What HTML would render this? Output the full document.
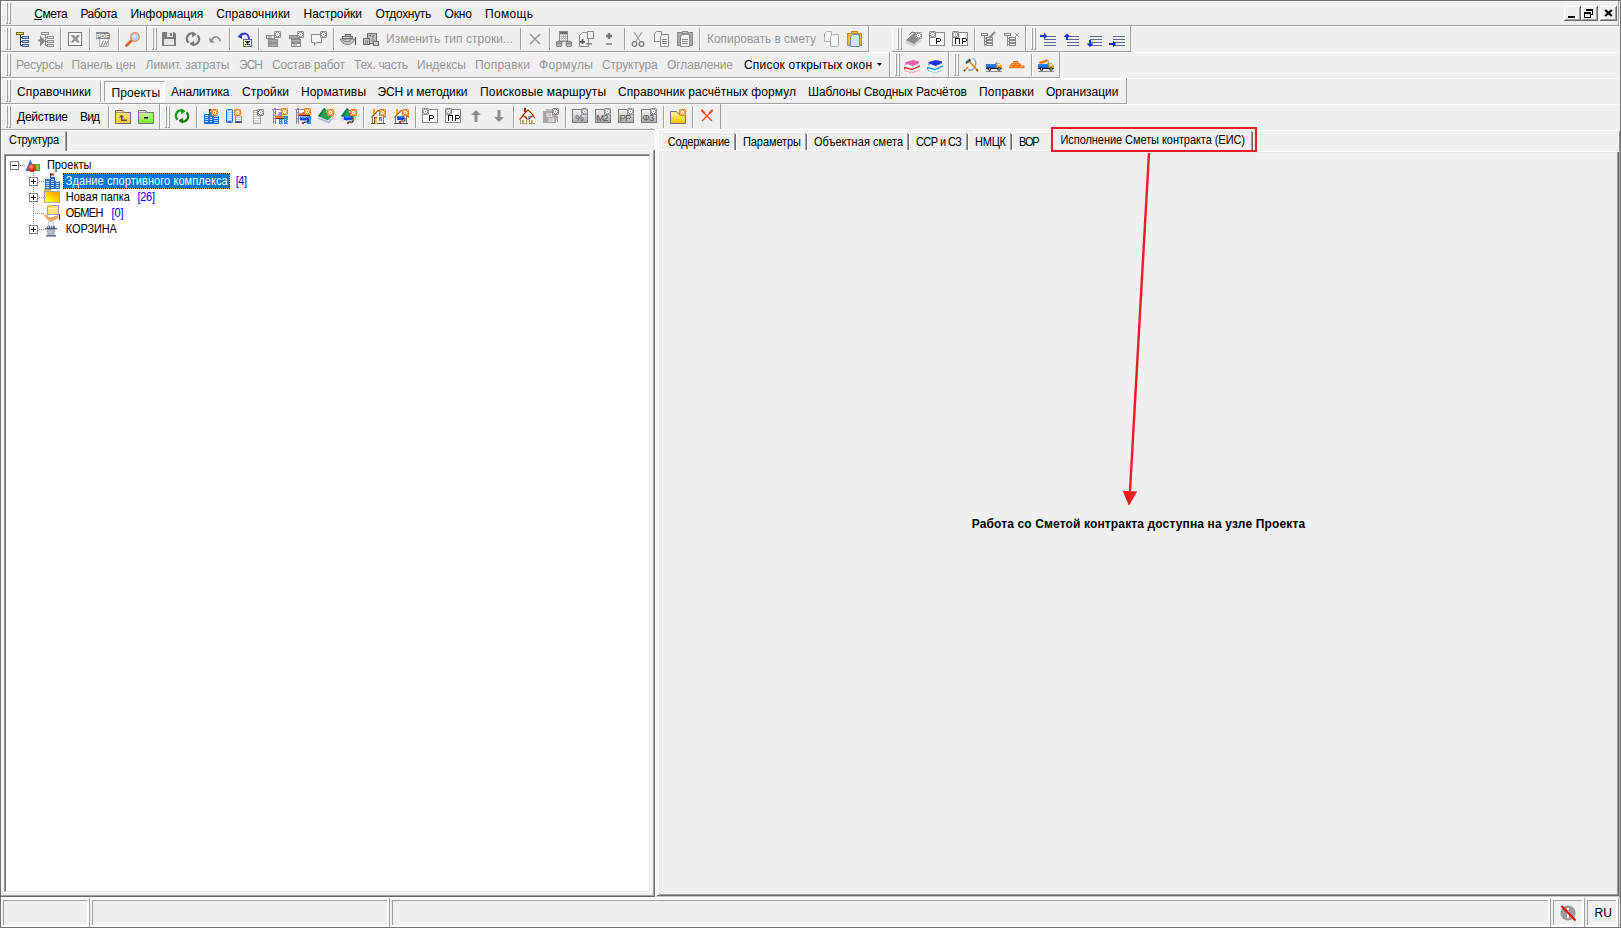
<!DOCTYPE html>
<html><head><meta charset="utf-8"><style>
html,body{margin:0;padding:0;}
body{width:1621px;height:928px;position:relative;overflow:hidden;background:#f0f0f0;font-family:"Liberation Sans",sans-serif;}
body>div,body>svg{position:absolute;}
.t{white-space:nowrap;}
.m{}
</style></head><body>
<div style="left:0px;top:0px;width:1621px;height:1px;background:#717171"></div>
<div style="left:0px;top:0px;width:1px;height:928px;background:#717171"></div>
<div style="left:1620px;top:0px;width:1px;height:928px;background:#717171"></div>
<div style="left:0px;top:927px;width:1621px;height:1px;background:#717171"></div>
<div style="left:1px;top:1px;width:1618px;height:1px;background:#ffffff"></div>
<div style="left:1px;top:1px;width:1px;height:926px;background:#ffffff"></div>
<div style="left:1618px;top:1px;width:1px;height:25px;background:#a0a0a0"></div>
<div style="left:1px;top:25px;width:1618px;height:1px;background:#a0a0a0"></div>
<div style="left:6px;top:3px;width:1px;height:20px;background:#ffffff"></div>
<div style="left:7px;top:3px;width:1px;height:21px;background:#a0a0a0"></div>
<div style="left:6px;top:23px;width:1px;height:1px;background:#a0a0a0"></div>
<div style="left:9px;top:3px;width:1px;height:20px;background:#ffffff"></div>
<div style="left:10px;top:3px;width:1px;height:21px;background:#a0a0a0"></div>
<div style="left:9px;top:23px;width:1px;height:1px;background:#a0a0a0"></div>
<div class="t m" style="left:34.30px;top:8px;font-size:12px;line-height:12px;color:#000;letter-spacing:-0.488px;">Смета</div>
<div class="t m" style="left:80.50px;top:8px;font-size:12px;line-height:12px;color:#000;letter-spacing:-0.525px;">Работа</div>
<div class="t m" style="left:130.50px;top:8px;font-size:12px;line-height:12px;color:#000;letter-spacing:-0.078px;">Информация</div>
<div class="t m" style="left:216.20px;top:8px;font-size:12px;line-height:12px;color:#000;letter-spacing:0.111px;">Справочники</div>
<div class="t m" style="left:303.60px;top:8px;font-size:12px;line-height:12px;color:#000;letter-spacing:-0.052px;">Настройки</div>
<div class="t m" style="left:375.40px;top:8px;font-size:12px;line-height:12px;color:#000;letter-spacing:-0.309px;">Отдохнуть</div>
<div class="t m" style="left:444.50px;top:8px;font-size:12px;line-height:12px;color:#000;letter-spacing:-0.125px;">Окно</div>
<div class="t m" style="left:485.00px;top:8px;font-size:12px;line-height:12px;color:#000;letter-spacing:0.325px;">Помощь</div>
<div style="left:34px;top:19px;width:8px;height:1px;background:#000"></div>
<div style="left:1564px;top:6px;width:17px;height:15px;background:#f0f0f0"></div>
<div style="left:1564px;top:6px;width:16px;height:1px;background:#ffffff"></div>
<div style="left:1564px;top:6px;width:1px;height:14px;background:#ffffff"></div>
<div style="left:1580px;top:6px;width:1px;height:15px;background:#696969"></div>
<div style="left:1579px;top:7px;width:1px;height:13px;background:#a0a0a0"></div>
<div style="left:1564px;top:20px;width:17px;height:1px;background:#696969"></div>
<div style="left:1565px;top:19px;width:15px;height:1px;background:#a0a0a0"></div>
<div style="left:1568px;top:16px;width:7px;height:2px;background:#000"></div>
<div style="left:1581px;top:6px;width:17px;height:15px;background:#f0f0f0"></div>
<div style="left:1581px;top:6px;width:16px;height:1px;background:#ffffff"></div>
<div style="left:1581px;top:6px;width:1px;height:14px;background:#ffffff"></div>
<div style="left:1597px;top:6px;width:1px;height:15px;background:#696969"></div>
<div style="left:1596px;top:7px;width:1px;height:13px;background:#a0a0a0"></div>
<div style="left:1581px;top:20px;width:17px;height:1px;background:#696969"></div>
<div style="left:1582px;top:19px;width:15px;height:1px;background:#a0a0a0"></div>
<svg style="left:1584px;top:9px" width="10" height="9" viewBox="0 0 10 9"><rect x="2" y="0" width="7" height="2" fill="#000"/><rect x="8" y="0" width="1" height="6" fill="#000"/><rect x="7" y="5" width="2" height="1" fill="#000"/><rect x="0" y="3" width="7" height="2" fill="#000"/><rect x="0" y="3" width="1" height="6" fill="#000"/><rect x="6" y="3" width="1" height="6" fill="#000"/><rect x="0" y="8" width="7" height="1" fill="#000"/></svg>
<div style="left:1600px;top:6px;width:17px;height:15px;background:#f0f0f0"></div>
<div style="left:1600px;top:6px;width:16px;height:1px;background:#ffffff"></div>
<div style="left:1600px;top:6px;width:1px;height:14px;background:#ffffff"></div>
<div style="left:1616px;top:6px;width:1px;height:15px;background:#696969"></div>
<div style="left:1615px;top:7px;width:1px;height:13px;background:#a0a0a0"></div>
<div style="left:1600px;top:20px;width:17px;height:1px;background:#696969"></div>
<div style="left:1601px;top:19px;width:15px;height:1px;background:#a0a0a0"></div>
<svg style="left:1604px;top:9px" width="9" height="8" viewBox="0 0 9 8"><path d="M1.2 1L7.8 7M7.8 1L1.2 7" stroke="#000" stroke-width="2.2"/></svg>
<div style="left:1px;top:26px;width:1618px;height:1px;background:#ffffff"></div>
<div style="left:1px;top:26px;width:145px;height:1px;background:#ffffff"></div>
<div style="left:1px;top:26px;width:1px;height:25px;background:#ffffff"></div>
<div style="left:146px;top:26px;width:1px;height:26px;background:#a0a0a0"></div>
<div style="left:1px;top:51px;width:146px;height:1px;background:#a0a0a0"></div>
<div style="left:6px;top:28px;width:1px;height:21px;background:#ffffff"></div>
<div style="left:7px;top:28px;width:1px;height:22px;background:#a0a0a0"></div>
<div style="left:6px;top:49px;width:1px;height:1px;background:#a0a0a0"></div>
<div style="left:9px;top:28px;width:1px;height:21px;background:#ffffff"></div>
<div style="left:10px;top:28px;width:1px;height:22px;background:#a0a0a0"></div>
<div style="left:9px;top:49px;width:1px;height:1px;background:#a0a0a0"></div>
<div style="left:60px;top:28px;width:1px;height:22px;background:#a0a0a0"></div>
<div style="left:61px;top:28px;width:1px;height:22px;background:#ffffff"></div>
<div style="left:89px;top:28px;width:1px;height:22px;background:#a0a0a0"></div>
<div style="left:90px;top:28px;width:1px;height:22px;background:#ffffff"></div>
<div style="left:118px;top:28px;width:1px;height:22px;background:#a0a0a0"></div>
<div style="left:119px;top:28px;width:1px;height:22px;background:#ffffff"></div>
<div style="left:147px;top:26px;width:721px;height:1px;background:#ffffff"></div>
<div style="left:147px;top:26px;width:1px;height:25px;background:#ffffff"></div>
<div style="left:868px;top:26px;width:1px;height:26px;background:#a0a0a0"></div>
<div style="left:147px;top:51px;width:722px;height:1px;background:#a0a0a0"></div>
<div style="left:152px;top:28px;width:1px;height:21px;background:#ffffff"></div>
<div style="left:153px;top:28px;width:1px;height:22px;background:#a0a0a0"></div>
<div style="left:152px;top:49px;width:1px;height:1px;background:#a0a0a0"></div>
<div style="left:155px;top:28px;width:1px;height:21px;background:#ffffff"></div>
<div style="left:156px;top:28px;width:1px;height:22px;background:#a0a0a0"></div>
<div style="left:155px;top:49px;width:1px;height:1px;background:#a0a0a0"></div>
<div style="left:229px;top:28px;width:1px;height:22px;background:#a0a0a0"></div>
<div style="left:230px;top:28px;width:1px;height:22px;background:#ffffff"></div>
<div style="left:258px;top:28px;width:1px;height:22px;background:#a0a0a0"></div>
<div style="left:259px;top:28px;width:1px;height:22px;background:#ffffff"></div>
<div style="left:333px;top:28px;width:1px;height:22px;background:#a0a0a0"></div>
<div style="left:334px;top:28px;width:1px;height:22px;background:#ffffff"></div>
<div style="left:520px;top:28px;width:1px;height:22px;background:#a0a0a0"></div>
<div style="left:521px;top:28px;width:1px;height:22px;background:#ffffff"></div>
<div style="left:549px;top:28px;width:1px;height:22px;background:#a0a0a0"></div>
<div style="left:550px;top:28px;width:1px;height:22px;background:#ffffff"></div>
<div style="left:624px;top:28px;width:1px;height:22px;background:#a0a0a0"></div>
<div style="left:625px;top:28px;width:1px;height:22px;background:#ffffff"></div>
<div style="left:699px;top:28px;width:1px;height:22px;background:#a0a0a0"></div>
<div style="left:700px;top:28px;width:1px;height:22px;background:#ffffff"></div>
<div class="t" style="left:386.00px;top:33px;font-size:12px;line-height:12px;color:#969696;letter-spacing:0.033px;">Изменить тип строки...</div>
<div class="t" style="left:707.00px;top:33px;font-size:12px;line-height:12px;color:#969696;letter-spacing:-0.048px;">Копировать в смету</div>
<div style="left:892px;top:26px;width:133px;height:1px;background:#ffffff"></div>
<div style="left:892px;top:26px;width:1px;height:25px;background:#ffffff"></div>
<div style="left:1025px;top:26px;width:1px;height:26px;background:#a0a0a0"></div>
<div style="left:892px;top:51px;width:134px;height:1px;background:#a0a0a0"></div>
<div style="left:897px;top:28px;width:1px;height:21px;background:#ffffff"></div>
<div style="left:898px;top:28px;width:1px;height:22px;background:#a0a0a0"></div>
<div style="left:897px;top:49px;width:1px;height:1px;background:#a0a0a0"></div>
<div style="left:900px;top:28px;width:1px;height:21px;background:#ffffff"></div>
<div style="left:901px;top:28px;width:1px;height:22px;background:#a0a0a0"></div>
<div style="left:900px;top:49px;width:1px;height:1px;background:#a0a0a0"></div>
<div style="left:974px;top:28px;width:1px;height:22px;background:#a0a0a0"></div>
<div style="left:975px;top:28px;width:1px;height:22px;background:#ffffff"></div>
<div style="left:1026px;top:26px;width:104px;height:1px;background:#ffffff"></div>
<div style="left:1026px;top:26px;width:1px;height:25px;background:#ffffff"></div>
<div style="left:1130px;top:26px;width:1px;height:26px;background:#a0a0a0"></div>
<div style="left:1026px;top:51px;width:105px;height:1px;background:#a0a0a0"></div>
<div style="left:1031px;top:28px;width:1px;height:21px;background:#ffffff"></div>
<div style="left:1032px;top:28px;width:1px;height:22px;background:#a0a0a0"></div>
<div style="left:1031px;top:49px;width:1px;height:1px;background:#a0a0a0"></div>
<div style="left:1034px;top:28px;width:1px;height:21px;background:#ffffff"></div>
<div style="left:1035px;top:28px;width:1px;height:22px;background:#a0a0a0"></div>
<div style="left:1034px;top:49px;width:1px;height:1px;background:#a0a0a0"></div>
<div style="left:1px;top:52px;width:1618px;height:1px;background:#ffffff"></div>
<div style="left:1px;top:52px;width:888px;height:1px;background:#ffffff"></div>
<div style="left:1px;top:52px;width:1px;height:25px;background:#ffffff"></div>
<div style="left:889px;top:52px;width:1px;height:26px;background:#a0a0a0"></div>
<div style="left:1px;top:77px;width:889px;height:1px;background:#a0a0a0"></div>
<div style="left:6px;top:54px;width:1px;height:21px;background:#ffffff"></div>
<div style="left:7px;top:54px;width:1px;height:22px;background:#a0a0a0"></div>
<div style="left:6px;top:75px;width:1px;height:1px;background:#a0a0a0"></div>
<div style="left:9px;top:54px;width:1px;height:21px;background:#ffffff"></div>
<div style="left:10px;top:54px;width:1px;height:22px;background:#a0a0a0"></div>
<div style="left:9px;top:75px;width:1px;height:1px;background:#a0a0a0"></div>
<div class="t d" style="left:16.00px;top:59px;font-size:12px;line-height:12px;color:#969696;letter-spacing:-0.052px;">Ресурсы</div>
<div class="t d" style="left:71.50px;top:59px;font-size:12px;line-height:12px;color:#969696;letter-spacing:-0.068px;">Панель цен</div>
<div class="t d" style="left:145.60px;top:59px;font-size:12px;line-height:12px;color:#969696;letter-spacing:-0.085px;">Лимит. затраты</div>
<div class="t d" style="left:239.00px;top:59px;font-size:12px;line-height:12px;color:#969696;letter-spacing:-0.969px;">ЭСН</div>
<div class="t d" style="left:272.00px;top:59px;font-size:12px;line-height:12px;color:#969696;letter-spacing:-0.199px;">Состав работ</div>
<div class="t d" style="left:354.00px;top:59px;font-size:12px;line-height:12px;color:#969696;letter-spacing:-0.271px;">Тех. часть</div>
<div class="t d" style="left:417.00px;top:59px;font-size:12px;line-height:12px;color:#969696;letter-spacing:0.010px;">Индексы</div>
<div class="t d" style="left:475.00px;top:59px;font-size:12px;line-height:12px;color:#969696;letter-spacing:0.214px;">Поправки</div>
<div class="t d" style="left:539.00px;top:59px;font-size:12px;line-height:12px;color:#969696;letter-spacing:0.292px;">Формулы</div>
<div class="t d" style="left:602.00px;top:59px;font-size:12px;line-height:12px;color:#969696;letter-spacing:-0.167px;">Структура</div>
<div class="t d" style="left:667.00px;top:59px;font-size:12px;line-height:12px;color:#969696;letter-spacing:-0.097px;">Оглавление</div>
<div class="t m" style="left:744.00px;top:59px;font-size:12px;line-height:12px;color:#000;letter-spacing:0.184px;">Список открытых окон</div>
<svg style="left:877px;top:63px" width="6" height="4" viewBox="0 0 6 4"><path d="M0 0h5L2.5 3z" fill="#000"/></svg>
<div style="left:890px;top:52px;width:58px;height:1px;background:#ffffff"></div>
<div style="left:890px;top:52px;width:1px;height:25px;background:#ffffff"></div>
<div style="left:948px;top:52px;width:1px;height:26px;background:#a0a0a0"></div>
<div style="left:890px;top:77px;width:59px;height:1px;background:#a0a0a0"></div>
<div style="left:895px;top:54px;width:1px;height:21px;background:#ffffff"></div>
<div style="left:896px;top:54px;width:1px;height:22px;background:#a0a0a0"></div>
<div style="left:895px;top:75px;width:1px;height:1px;background:#a0a0a0"></div>
<div style="left:898px;top:54px;width:1px;height:21px;background:#ffffff"></div>
<div style="left:899px;top:54px;width:1px;height:22px;background:#a0a0a0"></div>
<div style="left:898px;top:75px;width:1px;height:1px;background:#a0a0a0"></div>
<div style="left:949px;top:52px;width:110px;height:1px;background:#ffffff"></div>
<div style="left:949px;top:52px;width:1px;height:25px;background:#ffffff"></div>
<div style="left:1059px;top:52px;width:1px;height:26px;background:#a0a0a0"></div>
<div style="left:949px;top:77px;width:111px;height:1px;background:#a0a0a0"></div>
<div style="left:954px;top:54px;width:1px;height:21px;background:#ffffff"></div>
<div style="left:955px;top:54px;width:1px;height:22px;background:#a0a0a0"></div>
<div style="left:954px;top:75px;width:1px;height:1px;background:#a0a0a0"></div>
<div style="left:957px;top:54px;width:1px;height:21px;background:#ffffff"></div>
<div style="left:958px;top:54px;width:1px;height:22px;background:#a0a0a0"></div>
<div style="left:957px;top:75px;width:1px;height:1px;background:#a0a0a0"></div>
<div style="left:1031px;top:54px;width:1px;height:22px;background:#a0a0a0"></div>
<div style="left:1032px;top:54px;width:1px;height:22px;background:#ffffff"></div>
<div style="left:1px;top:78px;width:1618px;height:1px;background:#ffffff"></div>
<div style="left:1px;top:78px;width:1125px;height:1px;background:#ffffff"></div>
<div style="left:1px;top:78px;width:1px;height:25px;background:#ffffff"></div>
<div style="left:1126px;top:78px;width:1px;height:26px;background:#a0a0a0"></div>
<div style="left:1px;top:103px;width:1126px;height:1px;background:#a0a0a0"></div>
<div style="left:6px;top:80px;width:1px;height:21px;background:#ffffff"></div>
<div style="left:7px;top:80px;width:1px;height:22px;background:#a0a0a0"></div>
<div style="left:6px;top:101px;width:1px;height:1px;background:#a0a0a0"></div>
<div style="left:9px;top:80px;width:1px;height:21px;background:#ffffff"></div>
<div style="left:10px;top:80px;width:1px;height:22px;background:#a0a0a0"></div>
<div style="left:9px;top:101px;width:1px;height:1px;background:#a0a0a0"></div>
<div style="left:2px;top:79px;width:1124px;height:1px;background:#ffffff"></div>
<div style="left:100px;top:81px;width:1px;height:21px;background:#a0a0a0"></div>
<div style="left:101px;top:81px;width:1px;height:21px;background:#ffffff"></div>
<div style="left:104px;top:81px;width:61px;height:21px;box-sizing:border-box;border-top:1px solid #a0a0a0;border-left:1px solid #a0a0a0;border-right:1px solid #fff;border-bottom:1px solid #fff;background-color:#f0f0f0;background-image:repeating-conic-gradient(#fff 0 25%, #f0f0f0 0 50%);background-size:2px 2px"></div>
<div class="t m" style="left:17.00px;top:86px;font-size:12px;line-height:12px;color:#000;letter-spacing:0.131px;">Справочники</div>
<div class="t m" style="left:111.50px;top:87px;font-size:12px;line-height:12px;color:#000;letter-spacing:0.062px;">Проекты</div>
<div class="t m" style="left:171.00px;top:86px;font-size:12px;line-height:12px;color:#000;letter-spacing:-0.117px;">Аналитика</div>
<div class="t m" style="left:242.00px;top:86px;font-size:12px;line-height:12px;color:#000;letter-spacing:0.135px;">Стройки</div>
<div class="t m" style="left:301.00px;top:86px;font-size:12px;line-height:12px;color:#000;letter-spacing:0.141px;">Нормативы</div>
<div class="t m" style="left:377.50px;top:86px;font-size:12px;line-height:12px;color:#000;letter-spacing:-0.093px;">ЭСН и методики</div>
<div class="t m" style="left:480.00px;top:86px;font-size:12px;line-height:12px;color:#000;letter-spacing:0.180px;">Поисковые маршруты</div>
<div class="t m" style="left:618.00px;top:86px;font-size:12px;line-height:12px;color:#000;letter-spacing:0.082px;">Справочник расчётных формул</div>
<div class="t m" style="left:808.00px;top:86px;font-size:12px;line-height:12px;color:#000;letter-spacing:-0.079px;">Шаблоны Сводных Расчётов</div>
<div class="t m" style="left:979.00px;top:86px;font-size:12px;line-height:12px;color:#000;letter-spacing:0.214px;">Поправки</div>
<div class="t m" style="left:1046.00px;top:86px;font-size:12px;line-height:12px;color:#000;letter-spacing:-0.006px;">Организации</div>
<div style="left:1px;top:104px;width:1618px;height:1px;background:#ffffff"></div>
<div style="left:1px;top:104px;width:158px;height:1px;background:#ffffff"></div>
<div style="left:1px;top:104px;width:1px;height:25px;background:#ffffff"></div>
<div style="left:159px;top:104px;width:1px;height:26px;background:#a0a0a0"></div>
<div style="left:1px;top:129px;width:159px;height:1px;background:#a0a0a0"></div>
<div style="left:6px;top:106px;width:1px;height:21px;background:#ffffff"></div>
<div style="left:7px;top:106px;width:1px;height:22px;background:#a0a0a0"></div>
<div style="left:6px;top:127px;width:1px;height:1px;background:#a0a0a0"></div>
<div style="left:9px;top:106px;width:1px;height:21px;background:#ffffff"></div>
<div style="left:10px;top:106px;width:1px;height:22px;background:#a0a0a0"></div>
<div style="left:9px;top:127px;width:1px;height:1px;background:#a0a0a0"></div>
<div class="t m" style="left:17.00px;top:111px;font-size:12px;line-height:12px;color:#000;letter-spacing:-0.250px;">Действие</div>
<div class="t m" style="left:80.00px;top:111px;font-size:12px;line-height:12px;color:#000;letter-spacing:-0.844px;">Вид</div>
<div style="left:108px;top:106px;width:1px;height:22px;background:#a0a0a0"></div>
<div style="left:109px;top:106px;width:1px;height:22px;background:#ffffff"></div>
<div style="left:160px;top:104px;width:560px;height:1px;background:#ffffff"></div>
<div style="left:160px;top:104px;width:1px;height:25px;background:#ffffff"></div>
<div style="left:720px;top:104px;width:1px;height:26px;background:#a0a0a0"></div>
<div style="left:160px;top:129px;width:561px;height:1px;background:#a0a0a0"></div>
<div style="left:165px;top:106px;width:1px;height:21px;background:#ffffff"></div>
<div style="left:166px;top:106px;width:1px;height:22px;background:#a0a0a0"></div>
<div style="left:165px;top:127px;width:1px;height:1px;background:#a0a0a0"></div>
<div style="left:168px;top:106px;width:1px;height:21px;background:#ffffff"></div>
<div style="left:169px;top:106px;width:1px;height:22px;background:#a0a0a0"></div>
<div style="left:168px;top:127px;width:1px;height:1px;background:#a0a0a0"></div>
<div style="left:196px;top:106px;width:1px;height:22px;background:#a0a0a0"></div>
<div style="left:197px;top:106px;width:1px;height:22px;background:#ffffff"></div>
<div style="left:363px;top:106px;width:1px;height:22px;background:#a0a0a0"></div>
<div style="left:364px;top:106px;width:1px;height:22px;background:#ffffff"></div>
<div style="left:415px;top:106px;width:1px;height:22px;background:#a0a0a0"></div>
<div style="left:416px;top:106px;width:1px;height:22px;background:#ffffff"></div>
<div style="left:513px;top:106px;width:1px;height:22px;background:#a0a0a0"></div>
<div style="left:514px;top:106px;width:1px;height:22px;background:#ffffff"></div>
<div style="left:565px;top:106px;width:1px;height:22px;background:#a0a0a0"></div>
<div style="left:566px;top:106px;width:1px;height:22px;background:#ffffff"></div>
<div style="left:663px;top:106px;width:1px;height:22px;background:#a0a0a0"></div>
<div style="left:664px;top:106px;width:1px;height:22px;background:#ffffff"></div>
<div style="left:692px;top:106px;width:1px;height:22px;background:#a0a0a0"></div>
<div style="left:693px;top:106px;width:1px;height:22px;background:#ffffff"></div>
<svg style="left:16px;top:31px" width="16" height="16" viewBox="0 0 16 16"><rect x="0.5" y="1.5" width="7" height="2" fill="#ffff00" stroke="#6e6e1e" stroke-width="1" /><rect x="4" y="4" width="1" height="11" fill="#1f2d50" /><rect x="5" y="6" width="1" height="1" fill="#1f2d50" /><rect x="6.5" y="5.5" width="6" height="2" fill="#b4dcff" stroke="#50628e" stroke-width="1" /><rect x="5" y="10" width="1" height="1" fill="#1f2d50" /><rect x="6.5" y="9.5" width="6" height="2" fill="#b4dcff" stroke="#50628e" stroke-width="1" /><rect x="5" y="14" width="1" height="1" fill="#1f2d50" /><rect x="6.5" y="13.5" width="6" height="2" fill="#b4dcff" stroke="#50628e" stroke-width="1" /></svg>
<svg style="left:38px;top:31px" width="16" height="16" viewBox="0 0 16 16"><rect x="3.5" y="1.5" width="7" height="2" fill="#f0f0f0" stroke="#8a8a8a" stroke-width="1" /><rect x="7" y="4" width="1" height="11" fill="#8a8a8a" /><rect x="8" y="6" width="1" height="1" fill="#8a8a8a" /><rect x="9.5" y="5.5" width="6" height="2" fill="#f0f0f0" stroke="#8a8a8a" stroke-width="1" /><rect x="8" y="10" width="1" height="1" fill="#8a8a8a" /><rect x="9.5" y="9.5" width="6" height="2" fill="#f0f0f0" stroke="#8a8a8a" stroke-width="1" /><rect x="8" y="14" width="1" height="1" fill="#8a8a8a" /><rect x="9.5" y="13.5" width="6" height="2" fill="#f0f0f0" stroke="#8a8a8a" stroke-width="1" /><path d="M0 9.5h3.5M3 7l3 3-3 3z" stroke="#8a8a8a" stroke-width="2" fill="#8a8a8a"/></svg>
<svg style="left:68px;top:31px" width="16" height="16" viewBox="0 0 16 16"><rect x="0.5" y="1.5" width="13" height="13" fill="#fcfcfc" stroke="#7a7a7a" stroke-width="1" /><path d="M2.5 4h3.5l1.5 2.2L9 4h3l-2.8 3.8L12 11.5H8.5L7 9.3 5.5 11.5H2.5l3-3.7z" fill="#8a8a8a"/><path d="M4 5l6 6" stroke="#b8b8b8" stroke-width="0.8"/></svg>
<svg style="left:96px;top:31px" width="16" height="16" viewBox="0 0 16 16"><path d="M3.5 7.5h9v8h-9z" fill="#f4f4f4" stroke="#b0b0b0"/><path d="M5 15l2.5-5M7.5 15l2.5-5M10 15c0-2.5 1-4 2.5-4.5" stroke="#a0a0a0" stroke-width="1.2" fill="none"/><path d="M0 1h12l2 2v5H0z" fill="#8c8c8c"/><text x="6.8" y="7" font-family="Liberation Sans" font-weight="bold" font-size="6.2" fill="#fff" text-anchor="middle" letter-spacing="0.3">PDF</text></svg>
<svg style="left:125px;top:31px" width="16" height="16" viewBox="0 0 16 16"><path d="M1.5 14.5L6.5 9.5" stroke="#d8601c" stroke-width="2.6" stroke-linecap="round"/><circle cx="10" cy="6" r="4.3" fill="#b8ccf0" stroke="#e8884a" stroke-width="1.3"/><circle cx="9.5" cy="5.5" r="2" fill="#d8e6ff"/></svg>
<svg style="left:162px;top:31px" width="16" height="16" viewBox="0 0 16 16"><path d="M0 1h12l2 2v12H0z" fill="#7c7c7c"/><rect x="5" y="1" width="6" height="5" fill="#e6e6e6" /><rect x="8" y="2" width="2" height="3" fill="#7c7c7c" /><rect x="2" y="8" width="10" height="6" fill="#e6e6e6" /></svg>
<svg style="left:185px;top:31px" width="16" height="16" viewBox="0 0 16 16"><path d="M10 3.2A5.3 5.3 0 0 0 3.6 11.6" stroke="#7a7a7a" stroke-width="2.3" fill="none"/><path d="M6 12.8A5.3 5.3 0 0 0 12.4 4.4" stroke="#7a7a7a" stroke-width="2.3" fill="none"/><path d="M7 0.5l4.5 3-4.5 2.8z" fill="#7a7a7a"/><path d="M9 15.5l-4.5-3 4.5-2.8z" fill="#7a7a7a"/></svg>
<svg style="left:208px;top:31px" width="16" height="16" viewBox="0 0 16 16"><path d="M3.5 9.5C5 5 10.5 4.5 12.5 10.5" stroke="#8a8a8a" stroke-width="1.6" fill="none"/><path d="M1 6.5l1 5h5z" fill="#8a8a8a"/></svg>
<svg style="left:237px;top:31px" width="16" height="16" viewBox="0 0 16 16"><path d="M4 4.5C6 1.5 11 1.5 12 7.5V9" stroke="#3434e6" stroke-width="1.8" fill="none"/><path d="M0.5 5.5L5 1.5V8z" fill="#3434e6"/><rect x="6.5" y="8.5" width="8" height="7" fill="#fff" stroke="#5468a8" stroke-width="1" /><path d="M8 10l5 4M13 10l-5 4M10.5 10v4" stroke="#111" stroke-width="1.2"/></svg>
<svg style="left:266px;top:31px" width="16" height="16" viewBox="0 0 16 16"><rect x="0.5" y="4.5" width="8" height="3" fill="#f4f4f4" stroke="#8a8a8a" stroke-width="1" /><rect x="2" y="5.5" width="4" height="1" fill="#8a8a8a" /><rect x="2.5" y="8.5" width="9" height="3" fill="#a8a8a8" stroke="#8a8a8a" stroke-width="1" /><rect x="2.5" y="12.5" width="9" height="3" fill="#a8a8a8" stroke="#8a8a8a" stroke-width="1" /><rect x="8" y="0" width="7" height="7" rx="1.6" fill="#8a8a8a"/><rect x="11" y="1.5" width="1" height="4" fill="#ffffff"/><rect x="9.5" y="3" width="4" height="1" fill="#ffffff"/><rect x="10" y="2" width="3" height="3" fill="#ffffff"/><rect x="11" y="3" width="1" height="1" fill="#8a8a8a"/><rect x="9" y="1" width="1" height="1" fill="#fff" opacity="0.75"/><rect x="13" y="1" width="1" height="1" fill="#fff" opacity="0.75"/><rect x="9" y="5" width="1" height="1" fill="#fff" opacity="0.75"/><rect x="13" y="5" width="1" height="1" fill="#fff" opacity="0.75"/></svg>
<svg style="left:289px;top:31px" width="16" height="16" viewBox="0 0 16 16"><rect x="0.5" y="4.5" width="10" height="3" fill="#a8a8a8" stroke="#8a8a8a" stroke-width="1" /><rect x="2.5" y="8.5" width="9" height="3" fill="#a8a8a8" stroke="#8a8a8a" stroke-width="1" /><rect x="2.5" y="12.5" width="9" height="3" fill="#f4f4f4" stroke="#8a8a8a" stroke-width="1" /><rect x="4" y="13.5" width="4" height="1" fill="#8a8a8a" /><rect x="8" y="0" width="7" height="7" rx="1.6" fill="#8a8a8a"/><rect x="11" y="1.5" width="1" height="4" fill="#ffffff"/><rect x="9.5" y="3" width="4" height="1" fill="#ffffff"/><rect x="10" y="2" width="3" height="3" fill="#ffffff"/><rect x="11" y="3" width="1" height="1" fill="#8a8a8a"/><rect x="9" y="1" width="1" height="1" fill="#fff" opacity="0.75"/><rect x="13" y="1" width="1" height="1" fill="#fff" opacity="0.75"/><rect x="9" y="5" width="1" height="1" fill="#fff" opacity="0.75"/><rect x="13" y="5" width="1" height="1" fill="#fff" opacity="0.75"/></svg>
<svg style="left:311px;top:31px" width="16" height="16" viewBox="0 0 16 16"><path d="M0.5 3.5h10v8h-5l-2 3v-3H0.5z" fill="#f4f4f4" stroke="#8a8a8a"/><rect x="9" y="0" width="7" height="7" rx="1.6" fill="#8a8a8a"/><rect x="12" y="1.5" width="1" height="4" fill="#ffffff"/><rect x="10.5" y="3" width="4" height="1" fill="#ffffff"/><rect x="11" y="2" width="3" height="3" fill="#ffffff"/><rect x="12" y="3" width="1" height="1" fill="#8a8a8a"/><rect x="10" y="1" width="1" height="1" fill="#fff" opacity="0.75"/><rect x="14" y="1" width="1" height="1" fill="#fff" opacity="0.75"/><rect x="10" y="5" width="1" height="1" fill="#fff" opacity="0.75"/><rect x="14" y="5" width="1" height="1" fill="#fff" opacity="0.75"/></svg>
<svg style="left:340px;top:31px" width="16" height="16" viewBox="0 0 16 16"><rect x="5.5" y="3.5" width="5" height="2" fill="#b0b0b0" stroke="#6e6e6e" stroke-width="1" /><rect x="2.5" y="5.5" width="10" height="2" fill="#b0b0b0" stroke="#6e6e6e" stroke-width="1" /><rect x="6" y="6" width="3" height="1" fill="#e0e0e0" /><rect x="3" y="6" width="2" height="1" fill="#e0e0e0" /><path d="M0.5 8h14c-0.5 3-3 5.5-7 5.5S1 11 0.5 8z" fill="#c8c8c8" stroke="#7a7a7a" stroke-width="1"/><path d="M3 9.5c2 1.5 6 1.5 8 0" stroke="#777" stroke-width="1" fill="none"/><rect x="15" y="6" width="1" height="8" fill="#404040" /></svg>
<svg style="left:363px;top:31px" width="16" height="16" viewBox="0 0 16 16"><rect x="4.5" y="2.5" width="9" height="10" fill="#bcbcbc" stroke="#6a6a6a" stroke-width="1" /><rect x="6" y="4" width="2" height="1" fill="#555" /><rect x="9" y="4" width="2" height="2" fill="#888" /><rect x="9.5" y="6" width="1" height="3" fill="#888" /><rect x="8" y="9" width="4" height="1" fill="#999" /><rect x="0.5" y="7.5" width="6" height="6" fill="#c4c4c4" stroke="#6a6a6a" stroke-width="1" /><rect x="2" y="9" width="1" height="4" fill="#8a8a8a" /><rect x="4" y="9" width="1" height="4" fill="#8a8a8a" /><rect x="10.5" y="10.5" width="5" height="4" fill="#c8c8c8" stroke="#6a6a6a" stroke-width="1" /><rect x="11" y="11" width="1" height="1" fill="#fff" /></svg>
<svg style="left:527px;top:31px" width="16" height="16" viewBox="0 0 16 16"><path d="M3 3l10 10M13 3L3 13" stroke="#8c8c8c" stroke-width="1.2"/></svg>
<svg style="left:556px;top:31px" width="16" height="16" viewBox="0 0 16 16"><rect x="3.5" y="0.5" width="8" height="10" fill="#c0c0c0" stroke="#8a8a8a" stroke-width="1" /><rect x="4" y="1" width="7" height="2" fill="#707070" /><rect x="4" y="4" width="1" height="1" fill="#fff" /><rect x="6" y="4" width="1" height="1" fill="#fff" /><rect x="8" y="4" width="1" height="1" fill="#fff" /><rect x="10" y="4" width="1" height="1" fill="#fff" /><rect x="4" y="6" width="1" height="1" fill="#fff" /><rect x="6" y="6" width="1" height="1" fill="#fff" /><rect x="8" y="6" width="1" height="1" fill="#fff" /><rect x="10" y="6" width="1" height="1" fill="#fff" /><rect x="4" y="8" width="1" height="1" fill="#fff" /><rect x="6" y="8" width="1" height="1" fill="#fff" /><rect x="8" y="8" width="1" height="1" fill="#fff" /><rect x="10" y="8" width="1" height="1" fill="#fff" /><ellipse cx="3" cy="12" rx="3" ry="1.8" fill="#bbb" stroke="#777"/><ellipse cx="3" cy="14" rx="3" ry="1.8" fill="#bbb" stroke="#777"/><ellipse cx="13" cy="12" rx="3" ry="1.8" fill="#bbb" stroke="#777"/><ellipse cx="13" cy="14" rx="3" ry="1.8" fill="#bbb" stroke="#777"/></svg>
<svg style="left:579px;top:31px" width="16" height="16" viewBox="0 0 16 16"><path d="M0.5 4.5l3-3h6v14h-9z" fill="#f4f4f4" stroke="#8a8a8a"/><rect x="8.5" y="0.5" width="6" height="7" fill="#f4f4f4" stroke="#8a8a8a" stroke-width="1" /><rect x="1" y="10" width="5" height="1.6" fill="#555" /><rect x="2.7" y="8" width="1.6" height="5" fill="#555" /><rect x="7" y="12" width="6" height="1.6" fill="#888" /></svg>
<svg style="left:602px;top:31px" width="16" height="16" viewBox="0 0 16 16"><path d="M4 5h6M7 2v6" stroke="#777" stroke-width="2.5"/><rect x="4" y="12" width="6" height="2" fill="#999" /></svg>
<svg style="left:630px;top:31px" width="16" height="16" viewBox="0 0 16 16"><path d="M4 1l6 9M12 1L6 10" stroke="#999" stroke-width="1.1" fill="none"/><circle cx="4.5" cy="13" r="2.3" fill="none" stroke="#7a7a7a" stroke-width="1.3"/><circle cx="11.5" cy="13" r="2.3" fill="none" stroke="#7a7a7a" stroke-width="1.3"/></svg>
<svg style="left:654px;top:31px" width="16" height="16" viewBox="0 0 16 16"><path d="M0.5 2.5l2-2h5v10h-7z" fill="#f4f4f4" stroke="#8a8a8a"/><path d="M6.5 5.5l2-2h6v12h-8z" fill="#f4f4f4" stroke="#8a8a8a"/><rect x="8" y="8" width="5" height="1" fill="#8a8a8a" /><rect x="8" y="10" width="5" height="1" fill="#8a8a8a" /><rect x="8" y="12" width="5" height="1" fill="#8a8a8a" /></svg>
<svg style="left:677px;top:31px" width="16" height="16" viewBox="0 0 16 16"><rect x="0.5" y="1.5" width="15" height="13" fill="#a8a8a8" stroke="#8a8a8a" stroke-width="1" /><rect x="5.5" y="0.5" width="5" height="2" fill="#ccc" stroke="#8a8a8a" stroke-width="1" /><path d="M3.5 5.5l2-2h7v12h-9z" fill="#f4f4f4" stroke="#8a8a8a"/><rect x="5" y="8" width="6" height="1" fill="#8a8a8a" /><rect x="5" y="10" width="6" height="1" fill="#8a8a8a" /><rect x="5" y="12" width="6" height="1" fill="#8a8a8a" /></svg>
<svg style="left:824px;top:31px" width="16" height="16" viewBox="0 0 16 16"><path d="M0.5 2.5l2-2h5v10h-7z" fill="#f4f4f4" stroke="#b0b0b0"/><path d="M6.5 5.5l2-2h6v12h-8z" fill="#f4f4f4" stroke="#b0b0b0"/></svg>
<svg style="left:847px;top:31px" width="16" height="16" viewBox="0 0 16 16"><rect x="0.5" y="2.5" width="14" height="12" fill="#f5b82e" stroke="#d08a10" stroke-width="1" /><rect x="4.5" y="0.5" width="6" height="2" fill="#f7c84a" stroke="#d08a10" stroke-width="1" /><path d="M3.5 5.5l2-2h7v12h-9z" fill="#c8e6ee" stroke="#6d8f9a"/></svg>
<svg style="left:906px;top:31px" width="16" height="16" viewBox="0 0 16 16"><path d="M0 9v3l8 4 7-6V7z" fill="#d0d0d0"/><path d="M0 9l8 4 7-6-7-5z" fill="#8a8a8a"/><path d="M3 4l3-3 4 1" stroke="#707070" fill="none"/><rect x="9" y="1" width="7" height="7" rx="1.6" fill="#9a9a9a"/><rect x="12" y="2.5" width="1" height="4" fill="#ffffff"/><rect x="10.5" y="4" width="4" height="1" fill="#ffffff"/><rect x="11" y="3" width="3" height="3" fill="#ffffff"/><rect x="12" y="4" width="1" height="1" fill="#9a9a9a"/><rect x="10" y="2" width="1" height="1" fill="#fff" opacity="0.75"/><rect x="14" y="2" width="1" height="1" fill="#fff" opacity="0.75"/><rect x="10" y="6" width="1" height="1" fill="#fff" opacity="0.75"/><rect x="14" y="6" width="1" height="1" fill="#fff" opacity="0.75"/></svg>
<svg style="left:929px;top:31px" width="16" height="16" viewBox="0 0 16 16"><rect x="0.5" y="1.5" width="15" height="13" fill="#ffffff" stroke="#8a8a8a" stroke-width="1" /><rect x="0" y="0" width="7" height="7" rx="1.6" fill="#8a8a8a"/><rect x="3" y="1.5" width="1" height="4" fill="#ffffff"/><rect x="1.5" y="3" width="4" height="1" fill="#ffffff"/><rect x="2" y="2" width="3" height="3" fill="#ffffff"/><rect x="3" y="3" width="1" height="1" fill="#8a8a8a"/><rect x="1" y="1" width="1" height="1" fill="#fff" opacity="0.75"/><rect x="5" y="1" width="1" height="1" fill="#fff" opacity="0.75"/><rect x="1" y="5" width="1" height="1" fill="#fff" opacity="0.75"/><rect x="5" y="5" width="1" height="1" fill="#fff" opacity="0.75"/><rect x="7" y="7" width="1" height="6" fill="#111" /><rect x="8" y="7" width="3" height="1" fill="#111" /><rect x="8" y="10" width="3" height="1" fill="#111" /><rect x="11" y="8" width="1" height="2" fill="#111" /></svg>
<svg style="left:952px;top:31px" width="16" height="16" viewBox="0 0 16 16"><rect x="0.5" y="1.5" width="15" height="13" fill="#ffffff" stroke="#8a8a8a" stroke-width="1" /><rect x="0" y="0" width="7" height="7" rx="1.6" fill="#8a8a8a"/><rect x="3" y="1.5" width="1" height="4" fill="#ffffff"/><rect x="1.5" y="3" width="4" height="1" fill="#ffffff"/><rect x="2" y="2" width="3" height="3" fill="#ffffff"/><rect x="3" y="3" width="1" height="1" fill="#8a8a8a"/><rect x="1" y="1" width="1" height="1" fill="#fff" opacity="0.75"/><rect x="5" y="1" width="1" height="1" fill="#fff" opacity="0.75"/><rect x="1" y="5" width="1" height="1" fill="#fff" opacity="0.75"/><rect x="5" y="5" width="1" height="1" fill="#fff" opacity="0.75"/><rect x="3" y="7" width="1" height="6" fill="#111" /><rect x="4" y="7" width="3" height="1" fill="#111" /><rect x="7" y="7" width="1" height="6" fill="#111" /><rect x="10" y="7" width="1" height="6" fill="#111" /><rect x="11" y="7" width="3" height="1" fill="#111" /><rect x="11" y="10" width="3" height="1" fill="#111" /><rect x="14" y="8" width="1" height="2" fill="#111" /></svg>
<svg style="left:981px;top:31px" width="16" height="16" viewBox="0 0 16 16"><rect x="0.5" y="2.5" width="6" height="2" fill="#f0f0f0" stroke="#8a8a8a" stroke-width="1" /><rect x="3" y="5" width="1" height="10" fill="#8a8a8a" /><rect x="4" y="7" width="1" height="1" fill="#8a8a8a" /><rect x="5.5" y="6.5" width="6" height="2" fill="#f0f0f0" stroke="#8a8a8a" stroke-width="1" /><rect x="4" y="10" width="1" height="1" fill="#8a8a8a" /><rect x="5.5" y="9.5" width="6" height="2" fill="#f0f0f0" stroke="#8a8a8a" stroke-width="1" /><rect x="4" y="13" width="1" height="1" fill="#8a8a8a" /><rect x="5.5" y="12.5" width="6" height="2" fill="#f0f0f0" stroke="#8a8a8a" stroke-width="1" /><path d="M8 7l6-6" stroke="#888" stroke-width="2"/></svg>
<svg style="left:1004px;top:31px" width="16" height="16" viewBox="0 0 16 16"><rect x="0.5" y="2.5" width="6" height="2" fill="#f0f0f0" stroke="#8a8a8a" stroke-width="1" /><rect x="3" y="5" width="1" height="10" fill="#8a8a8a" /><rect x="4" y="7" width="1" height="1" fill="#8a8a8a" /><rect x="5.5" y="6.5" width="6" height="2" fill="#f0f0f0" stroke="#8a8a8a" stroke-width="1" /><rect x="4" y="10" width="1" height="1" fill="#8a8a8a" /><rect x="5.5" y="9.5" width="6" height="2" fill="#f0f0f0" stroke="#8a8a8a" stroke-width="1" /><rect x="4" y="13" width="1" height="1" fill="#8a8a8a" /><rect x="5.5" y="12.5" width="6" height="2" fill="#f0f0f0" stroke="#8a8a8a" stroke-width="1" /><path d="M11 2l4 4M15 2l-4 4" stroke="#999" stroke-width="1"/></svg>
<svg style="left:1040px;top:31px" width="16" height="16" viewBox="0 0 16 16"><rect x="4" y="5" width="12" height="1" fill="#5a6690" /><rect x="4" y="8" width="12" height="1" fill="#5a6690" /><rect x="4" y="11" width="12" height="1" fill="#5a6690" /><rect x="4" y="14" width="12" height="1" fill="#5a6690" /><path d="M0 4h4v-2.5l3 3.5-3 3.5V6H0z" fill="#1030e0"/></svg>
<svg style="left:1063px;top:31px" width="16" height="16" viewBox="0 0 16 16"><rect x="4" y="5" width="12" height="1" fill="#5a6690" /><rect x="4" y="8" width="12" height="1" fill="#5a6690" /><rect x="4" y="11" width="12" height="1" fill="#5a6690" /><rect x="4" y="14" width="12" height="1" fill="#5a6690" /><path d="M3 9V6H0.5L4 2.5 7.5 6H5v3z" fill="#1030e0"/></svg>
<svg style="left:1086px;top:31px" width="16" height="16" viewBox="0 0 16 16"><rect x="4" y="5" width="12" height="1" fill="#5a6690" /><rect x="4" y="8" width="12" height="1" fill="#5a6690" /><rect x="4" y="11" width="12" height="1" fill="#5a6690" /><rect x="4" y="14" width="12" height="1" fill="#5a6690" /><path d="M3 9v3.5H0.5L4 16l3.5-3.5H5V9z" fill="#1030e0"/></svg>
<svg style="left:1109px;top:31px" width="16" height="16" viewBox="0 0 16 16"><rect x="4" y="5" width="12" height="1" fill="#5a6690" /><rect x="4" y="8" width="12" height="1" fill="#5a6690" /><rect x="4" y="11" width="12" height="1" fill="#5a6690" /><rect x="4" y="14" width="12" height="1" fill="#5a6690" /><path d="M0 12h4v-2.5l3 3.5-3 3.5V14H0z" fill="#1030e0"/></svg>
<svg style="left:904px;top:57px" width="16" height="16" viewBox="0 0 16 16"><path d="M0.5 10.5l7.5 2 8-3.5v3l-8 3.5-7.5-2.5z" fill="#fff"/><path d="M0.5 10.5l7.5 2 8-3.5" stroke="#e82828" stroke-width="1.6" fill="none"/><path d="M0.5 10v2.5" stroke="#e82828" stroke-width="1"/><path d="M1 13.5l7 2.5 7.5-3" stroke="#e84040" stroke-width="1" stroke-dasharray="1.5 1" fill="none" opacity="0.8"/><path d="M8 12.5v3" stroke="#c8d4e4" stroke-width="1"/><path d="M2 6.5l6.5 2.5 6.5-3v2.5l-6.5 3L2.5 9z" fill="#fff"/><path d="M8.5 9v2.5M9 9.5l6-3" stroke="#c8d4e4" stroke-width="1" fill="none"/><path d="M2 5l7-2 6 1.5v1.5l-6.5 3L2 6.5z" fill="#e860b0"/><path d="M2 5v3.5" stroke="#d050a0" stroke-width="1"/></svg>
<svg style="left:927px;top:57px" width="16" height="16" viewBox="0 0 16 16"><path d="M0.5 10.5l7.5 2 8-3.5v3l-8 3.5-7.5-2.5z" fill="#fff"/><path d="M0.5 10.5l7.5 2 8-3.5" stroke="#1890e8" stroke-width="1.6" fill="none"/><path d="M0.5 10v2.5" stroke="#1890e8" stroke-width="1"/><path d="M1 13.5l7 2.5 7.5-3" stroke="#40a8f0" stroke-width="1" stroke-dasharray="1.5 1" fill="none" opacity="0.8"/><path d="M8 12.5v3" stroke="#c8d4e4" stroke-width="1"/><path d="M2 6.5l6.5 2.5 6.5-3v2.5l-6.5 3L2.5 9z" fill="#fff"/><path d="M8.5 9v2.5M9 9.5l6-3" stroke="#c8d4e4" stroke-width="1" fill="none"/><path d="M2 5l7-2 6 1.5v1.5l-6.5 3L2 6.5z" fill="#2030d8"/><path d="M2 5v3.5" stroke="#3050e0" stroke-width="1"/></svg>
<svg style="left:963px;top:57px" width="16" height="16" viewBox="0 0 16 16"><path d="M9.5 1A6.8 6.8 0 0 1 7 13.5" stroke="#8aa8b0" stroke-width="1.4" fill="none"/><path d="M7.5 13.5l-2.5-1" stroke="#8aa8b0" stroke-width="1.4"/><path d="M6.5 4.5L14.5 13.5" stroke="#e08a18" stroke-width="1.6"/><path d="M13.5 12.5l1.5 1.5" stroke="#8a4a08" stroke-width="2"/><path d="M3 6l4.5-3.5" stroke="#405058" stroke-width="2.4"/><path d="M1 14l4-4" stroke="#e08a18" stroke-width="1.6"/><path d="M1 14l1-1" stroke="#3a2a10" stroke-width="1.6"/></svg>
<svg style="left:986px;top:57px" width="16" height="16" viewBox="0 0 16 16"><defs><linearGradient id="tb" x1="0" y1="0" x2="0" y2="1"><stop offset="0" stop-color="#4aa0f8"/><stop offset="1" stop-color="#0a58d0"/></linearGradient></defs><path d="M0 7h9l1.5-2.5H11v7H0z" fill="url(#tb)"/><path d="M10.5 6h3l2.5 3v3h-5.5z" fill="#f8a020"/><rect x="11.5" y="7" width="2.5" height="1.5" fill="#c8f0ff" /><rect x="0" y="11" width="16" height="1" fill="#202020" /><circle cx="3.5" cy="12" r="1.8" fill="#111"/><circle cx="13" cy="12" r="1.8" fill="#111"/><circle cx="3.5" cy="12" r="0.8" fill="#f8f8a0"/><circle cx="13" cy="12" r="0.8" fill="#f8f8a0"/><rect x="0" y="14" width="16" height="1" fill="#606060" opacity="0.7"/></svg>
<svg style="left:1009px;top:57px" width="16" height="16" viewBox="0 0 16 16"><rect x="4" y="4" width="5.5" height="2.8" rx="1.3" fill="#f07008"/><rect x="5" y="5" width="3" height="0.8" fill="#ffb060"/><rect x="1.5" y="6.2" width="5.5" height="2.8" rx="1.3" fill="#f07008"/><rect x="2.5" y="7.2" width="3" height="0.8" fill="#ffb060"/><rect x="6.5" y="6.2" width="5.5" height="2.8" rx="1.3" fill="#f07008"/><rect x="7.5" y="7.2" width="3" height="0.8" fill="#ffb060"/><rect x="0" y="8.4" width="5.5" height="2.8" rx="1.3" fill="#f07008"/><rect x="1" y="9.4" width="3" height="0.8" fill="#ffb060"/><rect x="5" y="8.4" width="5.5" height="2.8" rx="1.3" fill="#f07008"/><rect x="6" y="9.4" width="3" height="0.8" fill="#ffb060"/><rect x="10" y="8.4" width="5.5" height="2.8" rx="1.3" fill="#f07008"/><rect x="11" y="9.4" width="3" height="0.8" fill="#ffb060"/></svg>
<svg style="left:1038px;top:57px" width="16" height="16" viewBox="0 0 16 16"><ellipse cx="3.5" cy="5.5" rx="2.5" ry="1.2" fill="#e86a08"/><ellipse cx="6" cy="4.6" rx="2.5" ry="1.3" fill="#f07a18"/><ellipse cx="8.5" cy="3.6" rx="2.2" ry="1.2" fill="#e86a08"/><defs><linearGradient id="tb" x1="0" y1="0" x2="0" y2="1"><stop offset="0" stop-color="#4aa0f8"/><stop offset="1" stop-color="#0a58d0"/></linearGradient></defs><path d="M0 7h9l1.5-2.5H11v7H0z" fill="url(#tb)"/><path d="M10.5 6h3l2.5 3v3h-5.5z" fill="#f8a020"/><rect x="11.5" y="7" width="2.5" height="1.5" fill="#c8f0ff" /><rect x="0" y="11" width="16" height="1" fill="#202020" /><circle cx="3.5" cy="12" r="1.8" fill="#111"/><circle cx="13" cy="12" r="1.8" fill="#111"/><circle cx="3.5" cy="12" r="0.8" fill="#f8f8a0"/><circle cx="13" cy="12" r="0.8" fill="#f8f8a0"/><rect x="0" y="14" width="16" height="1" fill="#606060" opacity="0.7"/></svg>
<svg style="left:115px;top:108px" width="16" height="16" viewBox="0 0 16 16"><defs><linearGradient id="gffe488ffcc28" x1="0" y1="0" x2="0" y2="1"><stop offset="0" stop-color="#ffe488"/><stop offset="1" stop-color="#ffcc28"/></linearGradient></defs><path d="M0.5 15.5V2.5h7l1.5 2h6.5v11z" fill="url(#gffe488ffcc28)" stroke="#6a6a7a"/><rect x="1" y="3" width="6" height="1" fill="#ffe488" /><path d="M0.5 4.5h15" stroke="#6a6a7a" stroke-width="1" opacity="0.6"/><path d="M6.5 6.5l-2.5 3h5z" fill="#4a5060"/><rect x="6" y="8" width="1.5" height="5" fill="#4a5060"/><rect x="6" y="11.5" width="6" height="1.5" fill="#4a5060"/></svg>
<svg style="left:138px;top:108px" width="16" height="16" viewBox="0 0 16 16"><defs><linearGradient id="gc8ffb870f020" x1="0" y1="0" x2="0" y2="1"><stop offset="0" stop-color="#c8ffb8"/><stop offset="1" stop-color="#70f020"/></linearGradient></defs><path d="M0.5 15.5V2.5h7l1.5 2h6.5v11z" fill="url(#gc8ffb870f020)" stroke="#8a6a88"/><rect x="1" y="3" width="6" height="1" fill="#c8ffb8" /><path d="M0.5 4.5h15" stroke="#8a6a88" stroke-width="1" opacity="0.6"/><rect x="6" y="9" width="4" height="1.6" fill="#222" /></svg>
<svg style="left:174px;top:108px" width="16" height="16" viewBox="0 0 16 16"><path d="M10 3.2A5.3 5.3 0 0 0 3.6 11.6" stroke="#1a9a1a" stroke-width="2.3" fill="none"/><path d="M6 12.8A5.3 5.3 0 0 0 12.4 4.4" stroke="#0a7a0a" stroke-width="2.3" fill="none"/><path d="M7 0.5l4.5 3-4.5 2.8z" fill="#1a9a1a"/><path d="M9 15.5l-4.5-3 4.5-2.8z" fill="#0a7a0a"/></svg>
<svg style="left:204px;top:108px" width="16" height="16" viewBox="0 0 16 16"><rect x="0" y="6" width="5" height="10" fill="#1a6fd8" /><rect x="5" y="4" width="4" height="12" fill="#1a6fd8" /><rect x="9" y="8" width="6" height="8" fill="#1a6fd8" /><rect x="1" y="7" width="3" height="1" fill="#b8d4ff" /><rect x="10" y="8" width="4" height="1" fill="#b8d4ff" /><rect x="1" y="9" width="3" height="1" fill="#b8d4ff" /><rect x="10" y="10" width="4" height="1" fill="#b8d4ff" /><rect x="1" y="11" width="3" height="1" fill="#b8d4ff" /><rect x="10" y="12" width="4" height="1" fill="#b8d4ff" /><rect x="1" y="13" width="3" height="1" fill="#b8d4ff" /><rect x="10" y="14" width="4" height="1" fill="#b8d4ff" /><rect x="6" y="9" width="2" height="1" fill="#b8d4ff" /><rect x="6" y="11" width="2" height="1" fill="#b8d4ff" /><rect x="6" y="13" width="2" height="1" fill="#b8d4ff" /><rect x="5" y="1" width="1" height="3" fill="#202020" /><rect x="6" y="1" width="1" height="2" fill="#e82020" /><rect x="7" y="1" width="7" height="7" rx="1.6" fill="#f08000"/><rect x="10" y="2.5" width="1" height="4" fill="#ffffff"/><rect x="8.5" y="4" width="4" height="1" fill="#ffffff"/><rect x="9" y="3" width="3" height="3" fill="#ffffff"/><rect x="10" y="4" width="1" height="1" fill="#f08000"/><rect x="8" y="2" width="1" height="1" fill="#fff" opacity="0.75"/><rect x="12" y="2" width="1" height="1" fill="#fff" opacity="0.75"/><rect x="8" y="6" width="1" height="1" fill="#fff" opacity="0.75"/><rect x="12" y="6" width="1" height="1" fill="#fff" opacity="0.75"/></svg>
<svg style="left:226px;top:108px" width="16" height="16" viewBox="0 0 16 16"><rect x="0.5" y="1.5" width="6" height="13" rx="1" fill="#a8c4f4" stroke="#1a70e0"/><rect x="1.5" y="3" width="4" height="1" fill="#e8f0ff" /><rect x="1.5" y="5" width="4" height="1" fill="#e8f0ff" /><rect x="1.5" y="7" width="4" height="1" fill="#e8f0ff" /><rect x="1.5" y="9" width="4" height="1" fill="#e8f0ff" /><rect x="1.5" y="11" width="4" height="1" fill="#e8f0ff" /><rect x="1.5" y="13" width="4" height="1" fill="#e8f0ff" /><rect x="1.5" y="13" width="4" height="1" fill="#4a50e0" /><rect x="9" y="8" width="7" height="7" fill="#d0d8e8" /><rect x="9" y="8" width="1" height="7" fill="#8a96a0" /><rect x="15" y="8" width="1" height="7" fill="#8a96a0" /><rect x="10" y="10" width="5" height="1" fill="#f0f4ff" /><rect x="10" y="12" width="5" height="1" fill="#f0f4ff" /><rect x="10" y="13" width="5" height="1" fill="#4a50e0" /><rect x="9" y="14" width="7" height="1" fill="#505860" /><rect x="8" y="1" width="7" height="7" rx="1.6" fill="#f08000"/><rect x="11" y="2.5" width="1" height="4" fill="#ffffff"/><rect x="9.5" y="4" width="4" height="1" fill="#ffffff"/><rect x="10" y="3" width="3" height="3" fill="#ffffff"/><rect x="11" y="4" width="1" height="1" fill="#f08000"/><rect x="9" y="2" width="1" height="1" fill="#fff" opacity="0.75"/><rect x="13" y="2" width="1" height="1" fill="#fff" opacity="0.75"/><rect x="9" y="6" width="1" height="1" fill="#fff" opacity="0.75"/><rect x="13" y="6" width="1" height="1" fill="#fff" opacity="0.75"/></svg>
<svg style="left:249px;top:108px" width="16" height="16" viewBox="0 0 16 16"><rect x="4.5" y="2.5" width="7" height="13" fill="#f4f4f4" stroke="#a8a8a8" stroke-width="1" /><rect x="5" y="4" width="6" height="1" fill="#d0d0d0" /><rect x="5" y="6" width="6" height="1" fill="#d0d0d0" /><rect x="5" y="8" width="6" height="1" fill="#d0d0d0" /><rect x="5" y="10" width="6" height="1" fill="#d0d0d0" /><rect x="5" y="12" width="6" height="1" fill="#d0d0d0" /><rect x="5" y="14" width="6" height="1" fill="#d0d0d0" /><rect x="8" y="1" width="7" height="7" rx="1.6" fill="#8a8a8a"/><rect x="11" y="2.5" width="1" height="4" fill="#ffffff"/><rect x="9.5" y="4" width="4" height="1" fill="#ffffff"/><rect x="10" y="3" width="3" height="3" fill="#ffffff"/><rect x="11" y="4" width="1" height="1" fill="#8a8a8a"/><rect x="9" y="2" width="1" height="1" fill="#fff" opacity="0.75"/><rect x="13" y="2" width="1" height="1" fill="#fff" opacity="0.75"/><rect x="9" y="6" width="1" height="1" fill="#fff" opacity="0.75"/><rect x="13" y="6" width="1" height="1" fill="#fff" opacity="0.75"/></svg>
<svg style="left:272px;top:108px" width="16" height="16" viewBox="0 0 16 16"><rect x="1" y="1" width="3" height="15" fill="#8a8a8a" /><rect x="2" y="2" width="1" height="2" fill="#f8f8f8" /><rect x="2" y="5" width="1" height="2" fill="#f8f8f8" /><rect x="2" y="8" width="1" height="2" fill="#f8f8f8" /><rect x="2" y="11" width="1" height="2" fill="#f8f8f8" /><rect x="2" y="14" width="1" height="2" fill="#f8f8f8" /><rect x="0" y="1" width="10" height="1" fill="#8a8a8a" /><rect x="2" y="0" width="2" height="2" fill="#9a6af0"/><rect x="4" y="2" width="6" height="6" fill="#ffffff" /><path d="M5 8.5L9.5 4" stroke="#602040" stroke-width="1"/><rect x="7" y="4" width="3" height="4" fill="#a878f8" /><rect x="4" y="8" width="11" height="2" fill="#f07808" /><rect x="4" y="10" width="11" height="1" fill="#802818" /><rect x="4" y="11" width="3" height="5" fill="#ffffff" /><rect x="7" y="11" width="4" height="5" fill="#2a8af8" /><rect x="12" y="8" width="4" height="8" fill="#2a8af8" /><rect x="8" y="12" width="1" height="1" fill="#d8ecff"/><rect x="8" y="14" width="1" height="1" fill="#d8ecff"/><rect x="10" y="12" width="1" height="1" fill="#d8ecff"/><rect x="10" y="14" width="1" height="1" fill="#d8ecff"/><rect x="13" y="11" width="1" height="1" fill="#d8ecff"/><rect x="13" y="13" width="1" height="1" fill="#d8ecff"/><rect x="15" y="12" width="1" height="1" fill="#d8ecff"/><rect x="15" y="14" width="1" height="1" fill="#d8ecff"/><rect x="9" y="0" width="7" height="7" rx="1.6" fill="#f08000"/><rect x="12" y="1.5" width="1" height="4" fill="#ffffff"/><rect x="10.5" y="3" width="4" height="1" fill="#ffffff"/><rect x="11" y="2" width="3" height="3" fill="#ffffff"/><rect x="12" y="3" width="1" height="1" fill="#f08000"/><rect x="10" y="1" width="1" height="1" fill="#fff" opacity="0.75"/><rect x="14" y="1" width="1" height="1" fill="#fff" opacity="0.75"/><rect x="10" y="5" width="1" height="1" fill="#fff" opacity="0.75"/><rect x="14" y="5" width="1" height="1" fill="#fff" opacity="0.75"/></svg>
<svg style="left:295px;top:108px" width="16" height="16" viewBox="0 0 16 16"><rect x="1" y="1" width="3" height="15" fill="#8a8a8a" /><rect x="2" y="2" width="1" height="2" fill="#f8f8f8" /><rect x="2" y="5" width="1" height="2" fill="#f8f8f8" /><rect x="2" y="8" width="1" height="2" fill="#f8f8f8" /><rect x="2" y="11" width="1" height="2" fill="#f8f8f8" /><rect x="2" y="14" width="1" height="2" fill="#f8f8f8" /><rect x="0" y="1" width="10" height="1" fill="#8a8a8a" /><rect x="2" y="0" width="2" height="2" fill="#9a6af0"/><rect x="4" y="2" width="6" height="6" fill="#ffffff" /><path d="M5 8.5L9.5 4" stroke="#602040" stroke-width="1"/><rect x="7" y="4" width="3" height="4" fill="#a878f8" /><rect x="4" y="5" width="11" height="2" fill="#f07808" /><rect x="4" y="7" width="11" height="1" fill="#802818" /><rect x="4" y="8" width="8" height="8" fill="#ffffff" /><rect x="12" y="8" width="4" height="8" fill="#2a8af8" /><rect x="5" y="8.5" width="7" height="4" rx="1" fill="#1040f0"/><rect x="6" y="9" width="5" height="1" fill="#50a8ff" /><path d="M12 10.5h1v3.5H9v1" stroke="#202020" fill="none" stroke-width="1"/><rect x="7" y="14" width="2" height="2" fill="#e81010" /><rect x="9" y="0" width="7" height="7" rx="1.6" fill="#f08000"/><rect x="12" y="1.5" width="1" height="4" fill="#ffffff"/><rect x="10.5" y="3" width="4" height="1" fill="#ffffff"/><rect x="11" y="2" width="3" height="3" fill="#ffffff"/><rect x="12" y="3" width="1" height="1" fill="#f08000"/><rect x="10" y="1" width="1" height="1" fill="#fff" opacity="0.75"/><rect x="14" y="1" width="1" height="1" fill="#fff" opacity="0.75"/><rect x="10" y="5" width="1" height="1" fill="#fff" opacity="0.75"/><rect x="14" y="5" width="1" height="1" fill="#fff" opacity="0.75"/></svg>
<svg style="left:318px;top:108px" width="16" height="16" viewBox="0 0 16 16"><path d="M0 9.5V12l11 4 4.5-6.5V8z" fill="#d8dce8"/><path d="M1 10.5l10 4 4-5.5" stroke="#a0a8c0" fill="none" stroke-width="1"/><path d="M6 0L0 8l10 4.5L15 7z" fill="#2e9a5e"/><path d="M6 0L0 8l2 1L7.5 1z" fill="#1e7a48"/><path d="M8 3.5l3 2" stroke="#e8fff0" stroke-width="1.2"/><rect x="9" y="1" width="7" height="7" rx="1.6" fill="#f08000"/><rect x="12" y="2.5" width="1" height="4" fill="#ffffff"/><rect x="10.5" y="4" width="4" height="1" fill="#ffffff"/><rect x="11" y="3" width="3" height="3" fill="#ffffff"/><rect x="12" y="4" width="1" height="1" fill="#f08000"/><rect x="10" y="2" width="1" height="1" fill="#fff" opacity="0.75"/><rect x="14" y="2" width="1" height="1" fill="#fff" opacity="0.75"/><rect x="10" y="6" width="1" height="1" fill="#fff" opacity="0.75"/><rect x="14" y="6" width="1" height="1" fill="#fff" opacity="0.75"/></svg>
<svg style="left:341px;top:108px" width="16" height="16" viewBox="0 0 16 16"><path d="M0 9.5V12l11 4 4.5-6.5V8z" fill="#d8dce8"/><path d="M1 10.5l10 4 4-5.5" stroke="#a0a8c0" fill="none" stroke-width="1"/><path d="M6 0L0 8l10 4.5L15 7z" fill="#2e9a5e"/><path d="M6 0L0 8l2 1L7.5 1z" fill="#1e7a48"/><path d="M8 3.5l3 2" stroke="#e8fff0" stroke-width="1.2"/><rect x="3" y="8" width="8" height="4" rx="1" fill="#1040f0"/><rect x="4" y="8.5" width="6" height="1" fill="#40b0ff" /><path d="M11 10h1v4H7.5v1" stroke="#202020" fill="none" stroke-width="1"/><rect x="6" y="14" width="2" height="2" fill="#e81010" /><rect x="9" y="1" width="7" height="7" rx="1.6" fill="#f08000"/><rect x="12" y="2.5" width="1" height="4" fill="#ffffff"/><rect x="10.5" y="4" width="4" height="1" fill="#ffffff"/><rect x="11" y="3" width="3" height="3" fill="#ffffff"/><rect x="12" y="4" width="1" height="1" fill="#f08000"/><rect x="10" y="2" width="1" height="1" fill="#fff" opacity="0.75"/><rect x="14" y="2" width="1" height="1" fill="#fff" opacity="0.75"/><rect x="10" y="6" width="1" height="1" fill="#fff" opacity="0.75"/><rect x="14" y="6" width="1" height="1" fill="#fff" opacity="0.75"/></svg>
<svg style="left:371px;top:108px" width="16" height="16" viewBox="0 0 16 16"><rect x="2" y="1" width="2" height="5" fill="#e89010" /><rect x="2.5" y="2" width="1" height="3" fill="#ffd040" /><path d="M2 8.5h11V15H2z" fill="#fff"/><path d="M1 9L7.5 2.5 14 9z" fill="#fff"/><path d="M0.5 9.5L7 2.5l1.5 0L15 9.5" stroke="#b05810" stroke-width="1.2" fill="none"/><rect x="1" y="8" width="1" height="8" fill="#777" /><rect x="12" y="8" width="1" height="8" fill="#777" /><rect x="0" y="15" width="14" height="1" fill="#555" /><rect x="3" y="9" width="3" height="7" fill="#8a5030" /><rect x="4" y="10" width="2" height="6" fill="#ffc020" /><rect x="8" y="9" width="3" height="4" fill="#3a80e0" /><rect x="9" y="10" width="1" height="3" fill="#90c0f0" /><rect x="8" y="1" width="7" height="7" rx="1.6" fill="#f08000"/><rect x="11" y="2.5" width="1" height="4" fill="#ffffff"/><rect x="9.5" y="4" width="4" height="1" fill="#ffffff"/><rect x="10" y="3" width="3" height="3" fill="#ffffff"/><rect x="11" y="4" width="1" height="1" fill="#f08000"/><rect x="9" y="2" width="1" height="1" fill="#fff" opacity="0.75"/><rect x="13" y="2" width="1" height="1" fill="#fff" opacity="0.75"/><rect x="9" y="6" width="1" height="1" fill="#fff" opacity="0.75"/><rect x="13" y="6" width="1" height="1" fill="#fff" opacity="0.75"/></svg>
<svg style="left:394px;top:108px" width="16" height="16" viewBox="0 0 16 16"><rect x="2" y="1" width="2" height="5" fill="#e89010" /><rect x="2.5" y="2" width="1" height="3" fill="#ffd040" /><path d="M2 8.5h11V15H2z" fill="#fff"/><path d="M1 9L7.5 2.5 14 9z" fill="#fff"/><path d="M0.5 9.5L7 2.5l1.5 0L15 9.5" stroke="#b05810" stroke-width="1.2" fill="none"/><rect x="1" y="8" width="1" height="8" fill="#777" /><rect x="12" y="8" width="1" height="8" fill="#777" /><rect x="0" y="15" width="14" height="1" fill="#555" /><rect x="3" y="8" width="7" height="4" rx="1" fill="#1040f0"/><rect x="4" y="8.5" width="5" height="1" fill="#40b0ff" /><path d="M10 10h1v3H6.5v1" stroke="#202020" fill="none" stroke-width="1"/><rect x="5" y="13" width="2" height="3" fill="#e81010" /><rect x="8" y="1" width="7" height="7" rx="1.6" fill="#f08000"/><rect x="11" y="2.5" width="1" height="4" fill="#ffffff"/><rect x="9.5" y="4" width="4" height="1" fill="#ffffff"/><rect x="10" y="3" width="3" height="3" fill="#ffffff"/><rect x="11" y="4" width="1" height="1" fill="#f08000"/><rect x="9" y="2" width="1" height="1" fill="#fff" opacity="0.75"/><rect x="13" y="2" width="1" height="1" fill="#fff" opacity="0.75"/><rect x="9" y="6" width="1" height="1" fill="#fff" opacity="0.75"/><rect x="13" y="6" width="1" height="1" fill="#fff" opacity="0.75"/></svg>
<svg style="left:422px;top:108px" width="16" height="16" viewBox="0 0 16 16"><rect x="0.5" y="1.5" width="15" height="13" fill="#ffffff" stroke="#8a8a8a" stroke-width="1" /><rect x="0" y="0" width="7" height="7" rx="1.6" fill="#8a8a8a"/><rect x="3" y="1.5" width="1" height="4" fill="#ffffff"/><rect x="1.5" y="3" width="4" height="1" fill="#ffffff"/><rect x="2" y="2" width="3" height="3" fill="#ffffff"/><rect x="3" y="3" width="1" height="1" fill="#8a8a8a"/><rect x="1" y="1" width="1" height="1" fill="#fff" opacity="0.75"/><rect x="5" y="1" width="1" height="1" fill="#fff" opacity="0.75"/><rect x="1" y="5" width="1" height="1" fill="#fff" opacity="0.75"/><rect x="5" y="5" width="1" height="1" fill="#fff" opacity="0.75"/><rect x="7" y="7" width="1" height="6" fill="#111" /><rect x="8" y="7" width="3" height="1" fill="#111" /><rect x="8" y="10" width="3" height="1" fill="#111" /><rect x="11" y="8" width="1" height="2" fill="#111" /></svg>
<svg style="left:445px;top:108px" width="16" height="16" viewBox="0 0 16 16"><rect x="0.5" y="1.5" width="15" height="13" fill="#ffffff" stroke="#8a8a8a" stroke-width="1" /><rect x="0" y="0" width="7" height="7" rx="1.6" fill="#8a8a8a"/><rect x="3" y="1.5" width="1" height="4" fill="#ffffff"/><rect x="1.5" y="3" width="4" height="1" fill="#ffffff"/><rect x="2" y="2" width="3" height="3" fill="#ffffff"/><rect x="3" y="3" width="1" height="1" fill="#8a8a8a"/><rect x="1" y="1" width="1" height="1" fill="#fff" opacity="0.75"/><rect x="5" y="1" width="1" height="1" fill="#fff" opacity="0.75"/><rect x="1" y="5" width="1" height="1" fill="#fff" opacity="0.75"/><rect x="5" y="5" width="1" height="1" fill="#fff" opacity="0.75"/><rect x="3" y="7" width="1" height="6" fill="#111" /><rect x="4" y="7" width="3" height="1" fill="#111" /><rect x="7" y="7" width="1" height="6" fill="#111" /><rect x="10" y="7" width="1" height="6" fill="#111" /><rect x="11" y="7" width="3" height="1" fill="#111" /><rect x="11" y="10" width="3" height="1" fill="#111" /><rect x="14" y="8" width="1" height="2" fill="#111" /></svg>
<svg style="left:468px;top:108px" width="16" height="16" viewBox="0 0 16 16"><path d="M8 2l5 5H9.5v7h-3V7H3z" fill="#8c8c8c"/></svg>
<svg style="left:491px;top:108px" width="16" height="16" viewBox="0 0 16 16"><path d="M8 14l5-5H9.5V2h-3v7H3z" fill="#8c8c8c"/></svg>
<svg style="left:519px;top:108px" width="16" height="16" viewBox="0 0 16 16"><path d="M4 7L9 2l5 5v3H4z" fill="#fff"/><path d="M3.5 7.5L9 2l5.5 5.5" stroke="#9a2a08" stroke-width="1.1" fill="none"/><rect x="5" y="0" width="2" height="4" fill="#9a2a08" /><rect x="4" y="7" width="1" height="5" fill="#999" /><rect x="13" y="7" width="1" height="4" fill="#999" /><rect x="6" y="8" width="2" height="3" fill="#d8a040" /><rect x="9" y="8" width="3" height="3" fill="#80b8ff" /><path d="M1.5 13V11l3-3 3 3v4h-6z" fill="#fff"/><path d="M0.5 11.5l4-4 4 4" stroke="#9a2a08" stroke-width="1.1" fill="none"/><rect x="1" y="12" width="1" height="4" fill="#999" /><rect x="7" y="12" width="1" height="4" fill="#999" /><rect x="1" y="15" width="7" height="1" fill="#999" /><rect x="3" y="12" width="2" height="4" fill="#d8a040" /><path d="M10.5 13V11l3-3 3 3v4h-6z" fill="#fff"/><path d="M9.5 11.5l4-4 4 4" stroke="#9a2a08" stroke-width="1.1" fill="none"/><rect x="10" y="12" width="1" height="4" fill="#999" /><rect x="16" y="12" width="1" height="4" fill="#999" /><rect x="10" y="15" width="7" height="1" fill="#999" /><rect x="12" y="12" width="2" height="4" fill="#d8a040" /></svg>
<svg style="left:543px;top:108px" width="16" height="16" viewBox="0 0 16 16"><rect x="3" y="1" width="11" height="11" fill="#b8b8b8" /><rect x="14" y="8" width="1" height="6" fill="#9a9a9a" /><rect x="0" y="3" width="13" height="12" fill="#a8a8a8" /><text x="6.5" y="9" font-family="Liberation Sans" font-weight="bold" font-size="6" fill="#f8f8f8" text-anchor="middle">01</text><text x="8" y="14" font-family="Liberation Sans" font-weight="bold" font-size="6" fill="#f8f8f8" text-anchor="middle">10</text><rect x="9" y="0" width="7" height="7" rx="1.6" fill="#8a8a8a"/><rect x="12" y="1.5" width="1" height="4" fill="#ffffff"/><rect x="10.5" y="3" width="4" height="1" fill="#ffffff"/><rect x="11" y="2" width="3" height="3" fill="#ffffff"/><rect x="12" y="3" width="1" height="1" fill="#8a8a8a"/><rect x="10" y="1" width="1" height="1" fill="#fff" opacity="0.75"/><rect x="14" y="1" width="1" height="1" fill="#fff" opacity="0.75"/><rect x="10" y="5" width="1" height="1" fill="#fff" opacity="0.75"/><rect x="14" y="5" width="1" height="1" fill="#fff" opacity="0.75"/></svg>
<svg style="left:572px;top:108px" width="16" height="16" viewBox="0 0 16 16"><defs><linearGradient id="gt2" x1="0" y1="0" x2="0" y2="1"><stop offset="0" stop-color="#f8f8f8"/><stop offset="1" stop-color="#a8a8a8"/></linearGradient></defs><rect x="0.5" y="1.5" width="15" height="13" fill="url(#gt2)" stroke="#7a7a7a" stroke-width="1" /><text x="7" y="13" font-family="Liberation Sans" font-size="9.5" fill="#505050" text-anchor="middle" letter-spacing="-0.8">%</text><rect x="9" y="0" width="7" height="7" rx="1.6" fill="#909090"/><rect x="12" y="1.5" width="1" height="4" fill="#ffffff"/><rect x="10.5" y="3" width="4" height="1" fill="#ffffff"/><rect x="11" y="2" width="3" height="3" fill="#ffffff"/><rect x="12" y="3" width="1" height="1" fill="#909090"/><rect x="10" y="1" width="1" height="1" fill="#fff" opacity="0.75"/><rect x="14" y="1" width="1" height="1" fill="#fff" opacity="0.75"/><rect x="10" y="5" width="1" height="1" fill="#fff" opacity="0.75"/><rect x="14" y="5" width="1" height="1" fill="#fff" opacity="0.75"/></svg>
<svg style="left:595px;top:108px" width="16" height="16" viewBox="0 0 16 16"><defs><linearGradient id="gt2" x1="0" y1="0" x2="0" y2="1"><stop offset="0" stop-color="#f8f8f8"/><stop offset="1" stop-color="#a8a8a8"/></linearGradient></defs><rect x="0.5" y="1.5" width="15" height="13" fill="url(#gt2)" stroke="#7a7a7a" stroke-width="1" /><text x="7" y="13" font-family="Liberation Sans" font-size="9.5" fill="#505050" text-anchor="middle" letter-spacing="-0.8">M2</text><rect x="9" y="0" width="7" height="7" rx="1.6" fill="#909090"/><rect x="12" y="1.5" width="1" height="4" fill="#ffffff"/><rect x="10.5" y="3" width="4" height="1" fill="#ffffff"/><rect x="11" y="2" width="3" height="3" fill="#ffffff"/><rect x="12" y="3" width="1" height="1" fill="#909090"/><rect x="10" y="1" width="1" height="1" fill="#fff" opacity="0.75"/><rect x="14" y="1" width="1" height="1" fill="#fff" opacity="0.75"/><rect x="10" y="5" width="1" height="1" fill="#fff" opacity="0.75"/><rect x="14" y="5" width="1" height="1" fill="#fff" opacity="0.75"/></svg>
<svg style="left:618px;top:108px" width="16" height="16" viewBox="0 0 16 16"><defs><linearGradient id="gt2" x1="0" y1="0" x2="0" y2="1"><stop offset="0" stop-color="#f8f8f8"/><stop offset="1" stop-color="#a8a8a8"/></linearGradient></defs><rect x="0.5" y="1.5" width="15" height="13" fill="url(#gt2)" stroke="#7a7a7a" stroke-width="1" /><text x="7" y="13" font-family="Liberation Sans" font-size="9.5" fill="#505050" text-anchor="middle" letter-spacing="-0.8">PP</text><rect x="9" y="0" width="7" height="7" rx="1.6" fill="#909090"/><rect x="12" y="1.5" width="1" height="4" fill="#ffffff"/><rect x="10.5" y="3" width="4" height="1" fill="#ffffff"/><rect x="11" y="2" width="3" height="3" fill="#ffffff"/><rect x="12" y="3" width="1" height="1" fill="#909090"/><rect x="10" y="1" width="1" height="1" fill="#fff" opacity="0.75"/><rect x="14" y="1" width="1" height="1" fill="#fff" opacity="0.75"/><rect x="10" y="5" width="1" height="1" fill="#fff" opacity="0.75"/><rect x="14" y="5" width="1" height="1" fill="#fff" opacity="0.75"/></svg>
<svg style="left:641px;top:108px" width="16" height="16" viewBox="0 0 16 16"><defs><linearGradient id="gt2" x1="0" y1="0" x2="0" y2="1"><stop offset="0" stop-color="#f8f8f8"/><stop offset="1" stop-color="#a8a8a8"/></linearGradient></defs><rect x="0.5" y="1.5" width="15" height="13" fill="url(#gt2)" stroke="#7a7a7a" stroke-width="1" /><text x="7" y="13" font-family="Liberation Sans" font-size="9.5" fill="#505050" text-anchor="middle" letter-spacing="-0.8">Ф3</text><rect x="9" y="0" width="7" height="7" rx="1.6" fill="#909090"/><rect x="12" y="1.5" width="1" height="4" fill="#ffffff"/><rect x="10.5" y="3" width="4" height="1" fill="#ffffff"/><rect x="11" y="2" width="3" height="3" fill="#ffffff"/><rect x="12" y="3" width="1" height="1" fill="#909090"/><rect x="10" y="1" width="1" height="1" fill="#fff" opacity="0.75"/><rect x="14" y="1" width="1" height="1" fill="#fff" opacity="0.75"/><rect x="10" y="5" width="1" height="1" fill="#fff" opacity="0.75"/><rect x="14" y="5" width="1" height="1" fill="#fff" opacity="0.75"/></svg>
<svg style="left:670px;top:108px" width="16" height="16" viewBox="0 0 16 16"><defs><linearGradient id="fyg" x1="0" y1="0" x2="0" y2="1"><stop offset="0" stop-color="#fff8c0"/><stop offset="0.5" stop-color="#ffe040"/><stop offset="1" stop-color="#f0c000"/></linearGradient></defs><path d="M0.5 15.5V3.5h6l1.5 2h7.5v10z" fill="url(#fyg)" stroke="#7a6a70"/><rect x="1" y="4" width="5" height="1" fill="#ffe890" /><rect x="9" y="1" width="7" height="7" rx="1.6" fill="#f08000"/><rect x="12" y="2.5" width="1" height="4" fill="#ffffff"/><rect x="10.5" y="4" width="4" height="1" fill="#ffffff"/><rect x="11" y="3" width="3" height="3" fill="#ffffff"/><rect x="12" y="4" width="1" height="1" fill="#f08000"/><rect x="10" y="2" width="1" height="1" fill="#fff" opacity="0.75"/><rect x="14" y="2" width="1" height="1" fill="#fff" opacity="0.75"/><rect x="10" y="6" width="1" height="1" fill="#fff" opacity="0.75"/><rect x="14" y="6" width="1" height="1" fill="#fff" opacity="0.75"/></svg>
<svg style="left:701px;top:108px" width="16" height="16" viewBox="0 0 16 16"><path d="M1 3L11 13M11 3L1 13" stroke="#f04828" stroke-width="1.4"/><path d="M1 2.5l2 2M11 2.5l-2 2" stroke="#f04828" stroke-width="2.2" stroke-linecap="round"/></svg>
<div style="left:1px;top:129px;width:651px;height:1px;background:#a0a0a0"></div>
<div style="left:651px;top:128px;width:1px;height:1px;background:#a0a0a0"></div>
<div style="left:1px;top:130px;width:652px;height:1px;background:#ffffff"></div>
<div style="left:1px;top:130px;width:1px;height:21px;background:#ffffff"></div>
<div style="left:2px;top:131px;width:63px;height:1px;background:#e8e8e8"></div>
<div style="left:65px;top:131px;width:1px;height:20px;background:#a0a0a0"></div>
<div style="left:66px;top:132px;width:1px;height:19px;background:#696969"></div>
<div class="t p" style="left:9.00px;top:135px;font-size:11px;line-height:11px;color:#000;transform:scaleY(1.125);transform-origin:0 9px;letter-spacing:-0.273px;">Структура</div>
<div style="left:67px;top:150px;width:587px;height:1px;background:#ffffff"></div>
<div style="left:653px;top:150px;width:1px;height:746px;background:#a0a0a0"></div>
<div style="left:654px;top:150px;width:1px;height:747px;background:#696969"></div>
<div style="left:1px;top:895px;width:653px;height:1px;background:#a0a0a0"></div>
<div style="left:1px;top:896px;width:654px;height:1px;background:#696969"></div>
<div style="left:4px;top:154px;width:647px;height:739px;background:#fff"></div>
<div style="left:4px;top:154px;width:646px;height:1px;background:#a0a0a0"></div>
<div style="left:4px;top:154px;width:1px;height:738px;background:#a0a0a0"></div>
<div style="left:5px;top:155px;width:644px;height:1px;background:#696969"></div>
<div style="left:5px;top:155px;width:1px;height:736px;background:#696969"></div>
<div style="left:5px;top:891px;width:645px;height:1px;background:#e3e3e3"></div>
<div style="left:649px;top:155px;width:1px;height:737px;background:#e3e3e3"></div>
<div style="left:655px;top:129px;width:1px;height:768px;background:#ffffff"></div>
<div style="left:656px;top:129px;width:961px;height:765px;background:#f0f0f0"></div>
<div style="left:656px;top:129px;width:1px;height:766px;background:#f8f8f8"></div>
<div style="left:657px;top:129px;width:1px;height:766px;background:#f8f8f8"></div>
<div style="left:658px;top:129px;width:394px;height:1px;background:#ffffff"></div>
<div style="left:1257px;top:130px;width:361px;height:1px;background:#ffffff"></div>
<div style="left:658px;top:129px;width:1px;height:766px;background:#ffffff"></div>
<div style="left:659px;top:151px;width:1px;height:743px;background:#e8e8e8"></div>
<div style="left:659px;top:150px;width:393px;height:1px;background:#ffffff"></div>
<div style="left:659px;top:151px;width:393px;height:1px;background:#e8e8e8"></div>
<div style="left:1257px;top:151px;width:361px;height:1px;background:#ffffff"></div>
<div style="left:1257px;top:152px;width:360px;height:1px;background:#e8e8e8"></div>
<div style="left:1618px;top:131px;width:1px;height:20px;background:#f8f8f8"></div>
<div style="left:1619px;top:131px;width:1px;height:20px;background:#8c8c8c"></div>
<div style="left:1617px;top:152px;width:1px;height:742px;background:#a0a0a0"></div>
<div style="left:1618px;top:152px;width:1px;height:744px;background:#696969"></div>
<div style="left:1619px;top:152px;width:1px;height:746px;background:#a0a0a0"></div>
<div style="left:659px;top:894px;width:959px;height:1px;background:#a0a0a0"></div>
<div style="left:657px;top:895px;width:962px;height:1px;background:#696969"></div>
<div style="left:657px;top:896px;width:962px;height:1px;background:#c8c8c8"></div>
<div style="left:662px;top:132px;width:72px;height:1px;background:#ffffff"></div>
<div style="left:661px;top:133px;width:1px;height:17px;background:#ffffff"></div>
<div style="left:734px;top:133px;width:1px;height:17px;background:#a0a0a0"></div>
<div style="left:735px;top:134px;width:1px;height:16px;background:#696969"></div>
<div style="left:662px;top:133px;width:72px;height:1px;background:#e6e6e6"></div>
<div class="t p" style="left:667.80px;top:137px;font-size:11px;line-height:11px;color:#000;transform:scaleY(1.125);transform-origin:0 9px;letter-spacing:-0.235px;">Содержание</div>
<div style="left:737px;top:132px;width:68px;height:1px;background:#ffffff"></div>
<div style="left:736px;top:133px;width:1px;height:17px;background:#ffffff"></div>
<div style="left:805px;top:133px;width:1px;height:17px;background:#a0a0a0"></div>
<div style="left:806px;top:134px;width:1px;height:16px;background:#696969"></div>
<div style="left:737px;top:133px;width:68px;height:1px;background:#e6e6e6"></div>
<div class="t p" style="left:743.00px;top:137px;font-size:11px;line-height:11px;color:#000;transform:scaleY(1.125);transform-origin:0 9px;letter-spacing:-0.078px;">Параметры</div>
<div style="left:808px;top:132px;width:99px;height:1px;background:#ffffff"></div>
<div style="left:807px;top:133px;width:1px;height:17px;background:#ffffff"></div>
<div style="left:907px;top:133px;width:1px;height:17px;background:#a0a0a0"></div>
<div style="left:908px;top:134px;width:1px;height:16px;background:#696969"></div>
<div style="left:808px;top:133px;width:99px;height:1px;background:#e6e6e6"></div>
<div class="t p" style="left:813.90px;top:137px;font-size:11px;line-height:11px;color:#000;transform:scaleY(1.125);transform-origin:0 9px;letter-spacing:0.043px;">Объектная смета</div>
<div style="left:910px;top:132px;width:56px;height:1px;background:#ffffff"></div>
<div style="left:909px;top:133px;width:1px;height:17px;background:#ffffff"></div>
<div style="left:966px;top:133px;width:1px;height:17px;background:#a0a0a0"></div>
<div style="left:967px;top:134px;width:1px;height:16px;background:#696969"></div>
<div style="left:910px;top:133px;width:56px;height:1px;background:#e6e6e6"></div>
<div class="t p" style="left:915.90px;top:137px;font-size:11px;line-height:11px;color:#000;transform:scaleY(1.125);transform-origin:0 9px;letter-spacing:-0.548px;">ССР и СЗ</div>
<div style="left:969px;top:132px;width:41px;height:1px;background:#ffffff"></div>
<div style="left:968px;top:133px;width:1px;height:17px;background:#ffffff"></div>
<div style="left:1010px;top:133px;width:1px;height:17px;background:#a0a0a0"></div>
<div style="left:1011px;top:134px;width:1px;height:16px;background:#696969"></div>
<div style="left:969px;top:133px;width:41px;height:1px;background:#e6e6e6"></div>
<div class="t p" style="left:975.00px;top:137px;font-size:11px;line-height:11px;color:#000;transform:scaleY(1.125);transform-origin:0 9px;letter-spacing:-0.208px;">НМЦК</div>
<div style="left:1013px;top:132px;width:39px;height:1px;background:#ffffff"></div>
<div style="left:1012px;top:133px;width:1px;height:17px;background:#ffffff"></div>
<div style="left:1013px;top:133px;width:39px;height:1px;background:#e6e6e6"></div>
<div class="t p" style="left:1019.00px;top:137px;font-size:11px;line-height:11px;color:#000;transform:scaleY(1.125);transform-origin:0 9px;letter-spacing:-1.087px;">ВОР</div>
<div style="left:1054px;top:129px;width:197px;height:1px;background:#ffffff"></div>
<div style="left:1053px;top:129px;width:1px;height:21px;background:#ffffff"></div>
<div style="left:1054px;top:131px;width:196px;height:1px;background:#e8e8e8"></div>
<div style="left:1251px;top:131px;width:1px;height:19px;background:#a0a0a0"></div>
<div style="left:1252px;top:132px;width:1px;height:18px;background:#696969"></div>
<div class="t p" style="left:1060.50px;top:135px;font-size:11px;line-height:11px;color:#000;transform:scaleY(1.125);transform-origin:0 9px;letter-spacing:-0.062px;">Исполнение Сметы контракта (ЕИС)</div>
<div style="left:1051px;top:127px;width:206px;height:25px;border:2px solid #ed1c24;box-sizing:border-box"></div>
<svg style="left:1110px;top:150px" width="50" height="360" viewBox="0 0 50 360"><line x1="39" y1="3" x2="20" y2="341" stroke="#ed1c24" stroke-width="2.4"/><path d="M12.6 340.7L27.2 341.5L18.9 355.8z" fill="#ed1c24"/></svg>
<div class="t b" style="left:971.70px;top:518px;font-size:12px;line-height:12px;color:#000;font-weight:bold;letter-spacing:0.136px;">Работа со Сметой контракта доступна на узле Проекта</div>
<div style="left:1px;top:897px;width:1618px;height:1px;background:#ffffff"></div>
<div style="left:1px;top:898px;width:1618px;height:1px;background:#ffffff"></div>
<div style="left:1px;top:899px;width:1618px;height:1px;background:#ffffff"></div>
<div style="left:1px;top:925px;width:1618px;height:1px;background:#ffffff"></div>
<div style="left:1px;top:926px;width:1618px;height:1px;background:#ffffff"></div>
<div style="left:3px;top:900px;width:84px;height:1px;background:#a0a0a0"></div>
<div style="left:3px;top:900px;width:1px;height:25px;background:#a0a0a0"></div>
<div style="left:87px;top:899px;width:1px;height:27px;background:#ffffff"></div>
<div style="left:88px;top:899px;width:1px;height:27px;background:#ffffff"></div>
<div style="left:89px;top:898px;width:1px;height:29px;background:#a0a0a0"></div>
<div style="left:92px;top:900px;width:295px;height:1px;background:#a0a0a0"></div>
<div style="left:92px;top:900px;width:1px;height:25px;background:#a0a0a0"></div>
<div style="left:387px;top:899px;width:1px;height:27px;background:#ffffff"></div>
<div style="left:388px;top:899px;width:1px;height:27px;background:#ffffff"></div>
<div style="left:389px;top:898px;width:1px;height:29px;background:#a0a0a0"></div>
<div style="left:392px;top:900px;width:1156px;height:1px;background:#a0a0a0"></div>
<div style="left:392px;top:900px;width:1px;height:25px;background:#a0a0a0"></div>
<div style="left:1548px;top:899px;width:1px;height:27px;background:#ffffff"></div>
<div style="left:1549px;top:899px;width:1px;height:27px;background:#ffffff"></div>
<div style="left:1550px;top:898px;width:1px;height:29px;background:#a0a0a0"></div>
<div style="left:1553px;top:900px;width:29px;height:1px;background:#a0a0a0"></div>
<div style="left:1553px;top:900px;width:1px;height:25px;background:#a0a0a0"></div>
<div style="left:1582px;top:899px;width:1px;height:27px;background:#ffffff"></div>
<div style="left:1583px;top:899px;width:1px;height:27px;background:#ffffff"></div>
<div style="left:1584px;top:898px;width:1px;height:29px;background:#a0a0a0"></div>
<div style="left:1587px;top:900px;width:29px;height:1px;background:#a0a0a0"></div>
<div style="left:1587px;top:900px;width:1px;height:25px;background:#a0a0a0"></div>
<div style="left:1616px;top:899px;width:1px;height:27px;background:#ffffff"></div>
<div style="left:1617px;top:899px;width:1px;height:27px;background:#ffffff"></div>
<div style="left:1618px;top:898px;width:1px;height:29px;background:#a0a0a0"></div>
<svg style="left:1560px;top:905px" width="17" height="17" viewBox="0 0 17 17"><circle cx="8" cy="8" r="7.6" fill="#9a9a9a"/><rect x="7" y="3" width="2" height="2" fill="#fff"/><rect x="7" y="6" width="2" height="7" fill="#fff"/><path d="M1.5 1L15.5 15.5" stroke="#ff0000" stroke-width="2.2"/></svg>
<div class="t m" style="left:1594.60px;top:907px;font-size:12px;line-height:12px;color:#000;">RU</div>
<div style="left:10px;top:161px;width:9px;height:9px;box-sizing:border-box;border:1px solid #808080;background:#fff"></div>
<div style="left:12px;top:165px;width:5px;height:1px;background:#000"></div>
<div style="left:20px;top:165px;width:1px;height:1px;background:#808080"></div>
<div style="left:22px;top:165px;width:1px;height:1px;background:#808080"></div>
<div style="left:24px;top:165px;width:1px;height:1px;background:#808080"></div>
<svg style="left:24px;top:158px" width="16" height="16" viewBox="0 0 16 16"><path d="M6.5 1L1.5 13h9z" fill="#2a78d0"/><rect x="9.5" y="6.5" width="6" height="6" fill="#7ccc3a" stroke="#5a9a2a" stroke-width="1" /><defs><radialGradient id="rs" cx="0.4" cy="0.35" r="0.7"><stop offset="0" stop-color="#ffb090"/><stop offset="0.5" stop-color="#f03a1a"/><stop offset="1" stop-color="#c01000"/></radialGradient></defs><circle cx="8" cy="10" r="3.9" fill="url(#rs)"/></svg>
<div class="t p" style="left:46.90px;top:160px;font-size:11px;line-height:11px;color:#000;transform:scaleY(1.125);transform-origin:0 9px;letter-spacing:0.063px;">Проекты</div>
<div style="left:33px;top:173px;width:1px;height:1px;background:#808080"></div>
<div style="left:33px;top:175px;width:1px;height:1px;background:#808080"></div>
<div style="left:33px;top:177px;width:1px;height:1px;background:#808080"></div>
<div style="left:33px;top:179px;width:1px;height:1px;background:#808080"></div>
<div style="left:33px;top:181px;width:1px;height:1px;background:#808080"></div>
<div style="left:33px;top:183px;width:1px;height:1px;background:#808080"></div>
<div style="left:33px;top:185px;width:1px;height:1px;background:#808080"></div>
<div style="left:33px;top:187px;width:1px;height:1px;background:#808080"></div>
<div style="left:33px;top:189px;width:1px;height:1px;background:#808080"></div>
<div style="left:33px;top:191px;width:1px;height:1px;background:#808080"></div>
<div style="left:33px;top:193px;width:1px;height:1px;background:#808080"></div>
<div style="left:33px;top:195px;width:1px;height:1px;background:#808080"></div>
<div style="left:33px;top:197px;width:1px;height:1px;background:#808080"></div>
<div style="left:33px;top:199px;width:1px;height:1px;background:#808080"></div>
<div style="left:33px;top:201px;width:1px;height:1px;background:#808080"></div>
<div style="left:33px;top:203px;width:1px;height:1px;background:#808080"></div>
<div style="left:33px;top:205px;width:1px;height:1px;background:#808080"></div>
<div style="left:33px;top:207px;width:1px;height:1px;background:#808080"></div>
<div style="left:33px;top:209px;width:1px;height:1px;background:#808080"></div>
<div style="left:33px;top:211px;width:1px;height:1px;background:#808080"></div>
<div style="left:33px;top:213px;width:1px;height:1px;background:#808080"></div>
<div style="left:33px;top:215px;width:1px;height:1px;background:#808080"></div>
<div style="left:33px;top:217px;width:1px;height:1px;background:#808080"></div>
<div style="left:33px;top:219px;width:1px;height:1px;background:#808080"></div>
<div style="left:33px;top:221px;width:1px;height:1px;background:#808080"></div>
<div style="left:33px;top:223px;width:1px;height:1px;background:#808080"></div>
<div style="left:29px;top:177px;width:9px;height:9px;box-sizing:border-box;border:1px solid #808080;background:#fff"></div>
<div style="left:31px;top:181px;width:5px;height:1px;background:#000"></div>
<div style="left:33px;top:179px;width:1px;height:5px;background:#000"></div>
<div style="left:39px;top:181px;width:1px;height:1px;background:#808080"></div>
<div style="left:41px;top:181px;width:1px;height:1px;background:#808080"></div>
<div style="left:43px;top:181px;width:1px;height:1px;background:#808080"></div>
<svg style="left:44px;top:173px" width="16" height="16" viewBox="0 0 16 16"><rect x="1" y="6" width="5" height="10" fill="#2a7ae0" /><rect x="6" y="4" width="5" height="12" fill="#1a60c8" /><rect x="11" y="8" width="5" height="8" fill="#2a7ae0" /><rect x="2" y="8" width="3" height="1" fill="#c8dcff" /><rect x="12" y="8" width="3" height="1" fill="#c8dcff" /><rect x="2" y="10" width="3" height="1" fill="#c8dcff" /><rect x="12" y="10" width="3" height="1" fill="#c8dcff" /><rect x="2" y="12" width="3" height="1" fill="#c8dcff" /><rect x="12" y="12" width="3" height="1" fill="#c8dcff" /><rect x="2" y="14" width="3" height="1" fill="#c8dcff" /><rect x="12" y="14" width="3" height="1" fill="#c8dcff" /><rect x="7" y="6" width="3" height="1" fill="#c8dcff" /><rect x="7" y="8" width="3" height="1" fill="#c8dcff" /><rect x="7" y="10" width="3" height="1" fill="#c8dcff" /><rect x="7" y="12" width="3" height="1" fill="#c8dcff" /><rect x="7" y="14" width="3" height="1" fill="#c8dcff" /><rect x="6" y="0" width="1" height="4" fill="#303030" /><path d="M7 0.5h3.5l-1 1 1 1H7z" fill="#e81818"/></svg>
<div style="left:63px;top:173px;width:167px;height:16px;background:#0078d7"></div>
<div style="left:63px;top:173px;width:167px;height:16px;box-sizing:border-box;border:1px solid #ff9a20"></div>
<div style="left:63px;top:173px;width:167px;height:16px;box-sizing:border-box;border:1px dotted #000"></div>
<div class="t p" style="left:65.80px;top:176px;font-size:11px;line-height:11px;color:#fff;transform:scaleY(1.125);transform-origin:0 9px;letter-spacing:0.075px;">Здание спортивного комплекса</div>
<div class="t p" style="left:235.70px;top:176px;font-size:11px;line-height:11px;color:#0000ff;transform:scaleY(1.125);transform-origin:0 9px;letter-spacing:-0.375px;">[4]</div>
<div style="left:29px;top:193px;width:9px;height:9px;box-sizing:border-box;border:1px solid #808080;background:#fff"></div>
<div style="left:31px;top:197px;width:5px;height:1px;background:#000"></div>
<div style="left:33px;top:195px;width:1px;height:5px;background:#000"></div>
<div style="left:39px;top:197px;width:1px;height:1px;background:#808080"></div>
<div style="left:41px;top:197px;width:1px;height:1px;background:#808080"></div>
<div style="left:43px;top:197px;width:1px;height:1px;background:#808080"></div>
<svg style="left:44px;top:189px" width="16" height="16" viewBox="0 0 16 16"><defs><linearGradient id="fo" x1="0" y1="1" x2="1" y2="0"><stop offset="0.2" stop-color="#ffff00"/><stop offset="1" stop-color="#ff8a00"/></linearGradient></defs><rect x="0.5" y="0.5" width="6" height="2" fill="#f0c030" stroke="#b0a070" stroke-width="1" /><rect x="0.5" y="2.5" width="15" height="11" fill="url(#fo)" stroke="#a8a8a8" stroke-width="1" /></svg>
<div class="t p" style="left:65.80px;top:192px;font-size:11px;line-height:11px;color:#000;transform:scaleY(1.125);transform-origin:0 9px;letter-spacing:0.008px;">Новая папка</div>
<div class="t p" style="left:137.60px;top:192px;font-size:11px;line-height:11px;color:#0000ff;transform:scaleY(1.125);transform-origin:0 9px;letter-spacing:-0.325px;">[26]</div>
<div style="left:35px;top:213px;width:1px;height:1px;background:#808080"></div>
<div style="left:37px;top:213px;width:1px;height:1px;background:#808080"></div>
<div style="left:39px;top:213px;width:1px;height:1px;background:#808080"></div>
<div style="left:41px;top:213px;width:1px;height:1px;background:#808080"></div>
<div style="left:43px;top:213px;width:1px;height:1px;background:#808080"></div>
<svg style="left:44px;top:205px" width="16" height="16" viewBox="0 0 16 16"><rect x="3.5" y="0.5" width="11" height="9" fill="#f8e478" stroke="#9a98b8" stroke-width="1" /><rect x="3" y="0" width="5" height="2" fill="#f0c840" /><rect x="4" y="3" width="10" height="1" fill="#fff4b0" /><path d="M0 9c2 0 3 1.5 5 2h6c1.5 0 2.5-1 3.5-1v2.5c-2 2.5-5 3.5-8 3.5S2 13 0 9z" fill="#f0a060"/><path d="M4 11.5h6" stroke="#fff" stroke-width="1"/><rect x="15" y="9" width="1" height="6" fill="#333" /></svg>
<div class="t p" style="left:65.80px;top:208px;font-size:11px;line-height:11px;color:#000;transform:scaleY(1.125);transform-origin:0 9px;letter-spacing:-0.662px;">ОБМЕН</div>
<div class="t p" style="left:111.50px;top:208px;font-size:11px;line-height:11px;color:#0000ff;transform:scaleY(1.125);transform-origin:0 9px;letter-spacing:-0.125px;">[0]</div>
<div style="left:29px;top:225px;width:9px;height:9px;box-sizing:border-box;border:1px solid #808080;background:#fff"></div>
<div style="left:31px;top:229px;width:5px;height:1px;background:#000"></div>
<div style="left:33px;top:227px;width:1px;height:5px;background:#000"></div>
<div style="left:39px;top:229px;width:1px;height:1px;background:#808080"></div>
<div style="left:41px;top:229px;width:1px;height:1px;background:#808080"></div>
<div style="left:43px;top:229px;width:1px;height:1px;background:#808080"></div>
<svg style="left:44px;top:221px" width="16" height="16" viewBox="0 0 16 16"><ellipse cx="7" cy="3" rx="3" ry="2.6" fill="#f4f8ff" stroke="#9ab0c0" stroke-width="0.8"/><rect x="3" y="5" width="8" height="2" fill="#6a7a8a" /><rect x="4" y="5.5" width="1" height="1" fill="#fff" /><rect x="6" y="5.5" width="1" height="1" fill="#fff" /><rect x="8" y="5.5" width="1" height="1" fill="#fff" /><rect x="1" y="7" width="12" height="1.2" fill="#4a5868" /><path d="M3 8.2h8l-0.5 6h-7z" fill="#7a8a9a"/><rect x="3.5" y="9" width="1" height="1" fill="#e8eef4"/><rect x="5.5" y="9" width="1" height="1" fill="#e8eef4"/><rect x="7.5" y="9" width="1" height="1" fill="#e8eef4"/><rect x="9.5" y="9" width="1" height="1" fill="#e8eef4"/><rect x="3.5" y="11" width="1" height="1" fill="#e8eef4"/><rect x="5.5" y="11" width="1" height="1" fill="#e8eef4"/><rect x="7.5" y="11" width="1" height="1" fill="#e8eef4"/><rect x="9.5" y="11" width="1" height="1" fill="#e8eef4"/><rect x="3.5" y="13" width="1" height="1" fill="#e8eef4"/><rect x="5.5" y="13" width="1" height="1" fill="#e8eef4"/><rect x="7.5" y="13" width="1" height="1" fill="#e8eef4"/><rect x="9.5" y="13" width="1" height="1" fill="#e8eef4"/><rect x="4.5" y="10" width="1" height="1" fill="#e8eef4"/><rect x="6.5" y="10" width="1" height="1" fill="#e8eef4"/><rect x="8.5" y="10" width="1" height="1" fill="#e8eef4"/><rect x="4.5" y="12" width="1" height="1" fill="#e8eef4"/><rect x="6.5" y="12" width="1" height="1" fill="#e8eef4"/><rect x="8.5" y="12" width="1" height="1" fill="#e8eef4"/><rect x="2" y="14.2" width="10" height="1.3" fill="#4a5868" /></svg>
<div class="t p" style="left:65.80px;top:224px;font-size:11px;line-height:11px;color:#000;transform:scaleY(1.125);transform-origin:0 9px;letter-spacing:-0.102px;">КОРЗИНА</div>
</body></html>
